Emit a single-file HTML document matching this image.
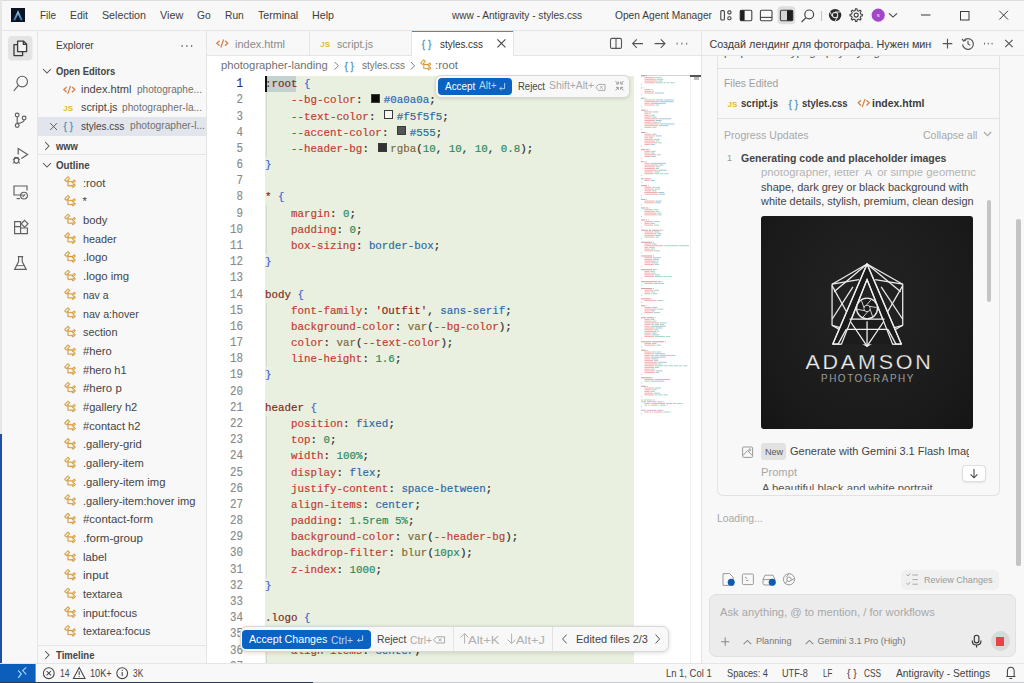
<!DOCTYPE html>
<html><head><meta charset="utf-8"><title>Antigravity - styles.css</title>
<style>
html,body{margin:0;padding:0;}
body{width:1024px;height:683px;overflow:hidden;position:relative;background:#f8f8f8;font-family:'Liberation Sans', sans-serif;}
.t{position:absolute;white-space:pre;line-height:1;}
svg{overflow:visible;}
</style></head><body>
<div style="position:absolute;left:0px;top:0px;width:1024px;height:30px;background:#f8f8f8;"></div><div style="position:absolute;left:0px;top:0px;width:1024px;height:1px;background:#dcdcdc;"></div><div style="position:absolute;left:0px;top:30px;width:1024px;height:1px;background:#e5e5e5;"></div><div style="position:absolute;left:0px;top:0px;width:2px;height:683px;background:#e6e6e6;"></div><div style="position:absolute;left:37px;top:31px;width:1px;height:633px;background:#e5e5e5;"></div><div style="position:absolute;left:206px;top:31px;width:1px;height:633px;background:#e5e5e5;"></div><div style="position:absolute;left:207px;top:31px;width:494px;height:25px;background:#f8f8f8;"></div><div style="position:absolute;left:207px;top:55px;width:494px;height:1px;background:#e5e5e5;"></div><div style="position:absolute;left:207px;top:56px;width:494px;height:608px;background:#ffffff;"></div><div style="position:absolute;left:701px;top:31px;width:1px;height:633px;background:#e5e5e5;"></div><div style="position:absolute;left:702px;top:55px;width:322px;height:1px;background:#e5e5e5;"></div><div style="position:absolute;left:0px;top:663px;width:1024px;height:1px;background:#e5e5e5;"></div><div style="position:absolute;left:0px;top:664px;width:1024px;height:19px;background:#f8f8f8;"></div><div style="position:absolute;left:0px;top:682px;width:1024px;height:1px;background:#c9cdd3;"></div><div style="position:absolute;left:0px;top:682px;width:313px;height:1px;background:#2b3a55;"></div><div style="position:absolute;left:0px;top:434px;width:2px;height:249px;background:#1f4fa0;"></div><div class="t" style="left:39.80px;top:10.44px;font-size:10.7px;color:#3c3c3c;transform:scaleX(0.9288);transform-origin:0 0;">File</div><div class="t" style="left:69.70px;top:10.44px;font-size:10.7px;color:#3c3c3c;transform:scaleX(0.9698);transform-origin:0 0;">Edit</div><div class="t" style="left:101.70px;top:10.44px;font-size:10.7px;color:#3c3c3c;transform:scaleX(0.9993);transform-origin:0 0;">Selection</div><div class="t" style="left:159.60px;top:10.44px;font-size:10.7px;color:#3c3c3c;transform:scaleX(1.0085);transform-origin:0 0;">View</div><div class="t" style="left:196.70px;top:10.44px;font-size:10.7px;color:#3c3c3c;transform:scaleX(0.9591);transform-origin:0 0;">Go</div><div class="t" style="left:224.50px;top:10.44px;font-size:10.7px;color:#3c3c3c;transform:scaleX(0.9575);transform-origin:0 0;">Run</div><div class="t" style="left:257.50px;top:10.44px;font-size:10.7px;color:#3c3c3c;transform:scaleX(0.9964);transform-origin:0 0;">Terminal</div><div class="t" style="left:312.00px;top:10.44px;font-size:10.7px;color:#3c3c3c;transform:scaleX(1.0005);transform-origin:0 0;">Help</div><div class="t" style="left:452.25px;top:10.44px;font-size:10.7px;color:#3c3c3c;transform:scaleX(0.9444);transform-origin:0 0;">www - Antigravity - styles.css</div><div class="t" style="left:615.20px;top:10.44px;font-size:10.7px;color:#3c3c3c;transform:scaleX(0.9547);transform-origin:0 0;">Open Agent Manager</div><div class="t" style="left:55.80px;top:41.33px;font-size:10px;color:#3b3b3b;transform:scaleX(1.0121);transform-origin:0 0;">Explorer</div><div class="t" style="left:55.80px;top:66.60px;font-size:10.4px;color:#454545;font-weight:700;transform:scaleX(0.9064);transform-origin:0 0;">Open Editors</div><div class="t" style="left:81.00px;top:83.99px;font-size:11px;color:#444;transform:scaleX(1.0068);transform-origin:0 0;">index.html</div><div class="t" style="left:137.00px;top:84.58px;font-size:10.3px;color:#717171;transform:scaleX(0.9784);transform-origin:0 0;">photographe...</div><div class="t" style="left:81.00px;top:102.39px;font-size:11px;color:#444;transform:scaleX(0.9788);transform-origin:0 0;">script.js</div><div class="t" style="left:122.30px;top:102.98px;font-size:10.3px;color:#717171;transform:scaleX(0.9838);transform-origin:0 0;">photographer-la...</div><div style="position:absolute;left:38px;top:117px;width:168px;height:18.5px;background:#e3e5ed;"></div><div class="t" style="left:81.00px;top:120.89px;font-size:11px;color:#444;transform:scaleX(0.9080);transform-origin:0 0;">styles.css</div><div class="t" style="left:130.00px;top:121.48px;font-size:10.3px;color:#717171;transform:scaleX(0.9920);transform-origin:0 0;">photographer-l...</div><div style="position:absolute;left:38px;top:154px;width:168px;height:1px;background:#e5e5e5;"></div><div class="t" style="left:56.05px;top:141.70px;font-size:10.4px;color:#454545;font-weight:700;transform:scaleX(0.9040);transform-origin:0 0;">www</div><div class="t" style="left:55.80px;top:160.70px;font-size:10.4px;color:#454545;font-weight:700;transform:scaleX(0.9378);transform-origin:0 0;">Outline</div><div class="t" style="left:82.50px;top:177.62px;font-size:11.2px;color:#444;transform:scaleX(1.0045);transform-origin:0 0;">:root</div><div class="t" style="left:82.50px;top:196.32px;font-size:11.2px;color:#444;">*</div><div class="t" style="left:82.50px;top:215.02px;font-size:11.2px;color:#444;transform:scaleX(1.0081);transform-origin:0 0;">body</div><div class="t" style="left:82.50px;top:233.72px;font-size:11.2px;color:#444;transform:scaleX(0.9674);transform-origin:0 0;">header</div><div class="t" style="left:82.50px;top:252.42px;font-size:11.2px;color:#444;transform:scaleX(1.0081);transform-origin:0 0;">.logo</div><div class="t" style="left:82.50px;top:271.12px;font-size:11.2px;color:#444;transform:scaleX(1.0171);transform-origin:0 0;">.logo img</div><div class="t" style="left:82.50px;top:289.82px;font-size:11.2px;color:#444;transform:scaleX(0.9293);transform-origin:0 0;">nav a</div><div class="t" style="left:82.50px;top:308.52px;font-size:11.2px;color:#444;transform:scaleX(0.9527);transform-origin:0 0;">nav a:hover</div><div class="t" style="left:82.50px;top:327.22px;font-size:11.2px;color:#444;transform:scaleX(0.9717);transform-origin:0 0;">section</div><div class="t" style="left:82.50px;top:345.92px;font-size:11.2px;color:#444;transform:scaleX(1.0027);transform-origin:0 0;">#hero</div><div class="t" style="left:82.50px;top:364.62px;font-size:11.2px;color:#444;transform:scaleX(0.9889);transform-origin:0 0;">#hero h1</div><div class="t" style="left:82.50px;top:383.32px;font-size:11.2px;color:#444;transform:scaleX(1.0206);transform-origin:0 0;">#hero p</div><div class="t" style="left:82.50px;top:402.02px;font-size:11.2px;color:#444;transform:scaleX(0.9905);transform-origin:0 0;">#gallery h2</div><div class="t" style="left:82.50px;top:420.72px;font-size:11.2px;color:#444;transform:scaleX(0.9930);transform-origin:0 0;">#contact h2</div><div class="t" style="left:82.50px;top:439.42px;font-size:11.2px;color:#444;transform:scaleX(1.0039);transform-origin:0 0;">.gallery-grid</div><div class="t" style="left:82.50px;top:458.12px;font-size:11.2px;color:#444;transform:scaleX(0.9962);transform-origin:0 0;">.gallery-item</div><div class="t" style="left:82.50px;top:476.82px;font-size:11.2px;color:#444;transform:scaleX(1.0042);transform-origin:0 0;">.gallery-item img</div><div class="t" style="left:82.50px;top:495.52px;font-size:11.2px;color:#444;transform:scaleX(0.9930);transform-origin:0 0;">.gallery-item:hover img</div><div class="t" style="left:82.50px;top:514.22px;font-size:11.2px;color:#444;transform:scaleX(1.0221);transform-origin:0 0;">#contact-form</div><div class="t" style="left:82.50px;top:532.92px;font-size:11.2px;color:#444;transform:scaleX(1.0362);transform-origin:0 0;">.form-group</div><div class="t" style="left:82.50px;top:551.62px;font-size:11.2px;color:#444;transform:scaleX(1.0026);transform-origin:0 0;">label</div><div class="t" style="left:82.50px;top:570.32px;font-size:11.2px;color:#444;transform:scaleX(1.0492);transform-origin:0 0;">input</div><div class="t" style="left:82.50px;top:589.02px;font-size:11.2px;color:#444;transform:scaleX(0.9694);transform-origin:0 0;">textarea</div><div class="t" style="left:82.50px;top:607.72px;font-size:11.2px;color:#444;transform:scaleX(1.0018);transform-origin:0 0;">input:focus</div><div class="t" style="left:82.50px;top:626.42px;font-size:11.2px;color:#444;transform:scaleX(0.9597);transform-origin:0 0;">textarea:focus</div><div style="position:absolute;left:38px;top:645px;width:168px;height:1px;background:#e5e5e5;"></div><div class="t" style="left:56.00px;top:651.00px;font-size:10.4px;color:#454545;font-weight:700;transform:scaleX(0.9163);transform-origin:0 0;">Timeline</div><div style="position:absolute;left:309px;top:31px;width:1px;height:24px;background:#e5e5e5;"></div><div style="position:absolute;left:411px;top:31px;width:1px;height:24px;background:#e5e5e5;"></div><div style="position:absolute;left:412px;top:31px;width:101px;height:25px;background:#ffffff;"></div><div style="position:absolute;left:412px;top:31px;width:101px;height:1px;background:#3c8ed0;"></div><div style="position:absolute;left:513px;top:31px;width:1px;height:24px;background:#e5e5e5;"></div><div class="t" style="left:234.50px;top:38.59px;font-size:11px;color:#8a8a8a;transform:scaleX(0.9968);transform-origin:0 0;">index.html</div><div class="t" style="left:337.00px;top:38.59px;font-size:11px;color:#8a8a8a;transform:scaleX(0.9654);transform-origin:0 0;">script.js</div><div class="t" style="left:439.60px;top:38.59px;font-size:11px;color:#333333;transform:scaleX(0.9018);transform-origin:0 0;">styles.css</div><div class="t" style="left:221.00px;top:59.92px;font-size:11.2px;color:#717171;transform:scaleX(1.0046);transform-origin:0 0;">photographer-landing</div><div class="t" style="left:362.00px;top:60.09px;font-size:11px;color:#717171;transform:scaleX(0.9018);transform-origin:0 0;">styles.css</div><div class="t" style="left:435.00px;top:60.09px;font-size:11px;color:#717171;transform:scaleX(1.0455);transform-origin:0 0;">:root</div><div style="position:absolute;left:716.5px;top:40px;width:283.5px;height:455.5px;border:1px solid #e2e2e2;border-top:none;border-radius:0 0 6px 6px;box-sizing:border-box;background:#f8f8f8;"></div><div style="position:absolute;left:717px;top:68px;width:282px;height:1px;background:#e2e2e2;"></div><div style="position:absolute;left:717px;top:118px;width:282px;height:1px;background:#e2e2e2;"></div><div style="position:absolute;left:760.7px;top:216px;width:212.7px;height:212.7px;background:radial-gradient(ellipse at 50% 40%, #232323 0%, #1c1c1c 60%, #151515 100%);border-radius:3px;"></div><div style="position:absolute;left:986.7px;top:199.5px;width:4.6px;height:102px;background:#c4c4c4;border-radius:2px;"></div><div style="position:absolute;left:1016.2px;top:219px;width:4.4px;height:347px;background:#c4c4c4;border-radius:2px;"></div><div style="position:absolute;left:761px;top:443px;width:25px;height:17.3px;background:#e2e2e2;border-radius:3px;"></div><div style="position:absolute;left:962px;top:465.4px;width:24px;height:16.4px;background:#ffffff;border:1px solid #dedede;border-radius:4px;box-sizing:border-box;box-shadow:0 1px 2px rgba(0,0,0,0.08);"></div><div style="position:absolute;left:900.8px;top:570.4px;width:98.5px;height:19.2px;background:#f0f0f0;border-radius:5px;"></div><div style="position:absolute;left:709.4px;top:593.6px;width:306.4px;height:63px;background:#ececec;border:1px solid #e0e0e0;border-radius:7px;box-sizing:border-box;"></div><div style="position:absolute;left:990.5px;top:631.3px;width:19.2px;height:20px;background:#d9d9d9;border-radius:50%;"></div><div style="position:absolute;left:702px;top:31px;width:322px;height:24px;background:#f8f8f8;"></div><div style="position:absolute;left:702px;top:55px;width:322px;height:1px;background:#e5e5e5;"></div><div style="position:absolute;left:996px;top:637px;width:8.4px;height:8.6px;background:#e0474c;"></div><div class="t" style="left:709.40px;top:38.86px;font-size:10.8px;color:#3b3b3b;width:223.00px;overflow:hidden;">Создай лендинг для фотографа. Нужен мині</div><div class="t" style="left:723.75px;top:79.00px;font-size:10.4px;color:#a0a0a0;transform:scaleX(0.9993);transform-origin:0 0;">Files Edited</div><div class="t" style="left:741.00px;top:97.69px;font-size:11px;color:#3b3b3b;font-weight:700;transform:scaleX(0.8771);transform-origin:0 0;">script.js</div><div class="t" style="left:802.00px;top:97.69px;font-size:11px;color:#3b3b3b;font-weight:700;transform:scaleX(0.8672);transform-origin:0 0;">styles.css</div><div class="t" style="left:872.00px;top:97.69px;font-size:11px;color:#3b3b3b;font-weight:700;transform:scaleX(0.9527);transform-origin:0 0;">index.html</div><div class="t" style="left:724.00px;top:129.63px;font-size:10.6px;color:#a8a8a8;transform:scaleX(0.9982);transform-origin:0 0;">Progress Updates</div><div class="t" style="left:922.80px;top:129.71px;font-size:10.5px;color:#a8a8a8;transform:scaleX(1.0021);transform-origin:0 0;">Collapse all</div><div class="t" style="left:727.00px;top:154.08px;font-size:9px;color:#9a9a9a;">1</div><div class="t" style="left:740.60px;top:153.39px;font-size:11px;color:#444;font-weight:700;transform:scaleX(0.9546);transform-origin:0 0;">Generating code and placeholder images</div><div style="position:absolute;left:740px;top:169.6px;width:250px;height:11px;overflow:hidden;"><div class="t" style="left:21.25px;top:-2.91px;font-size:11px;color:#b4b4b4;transform:scaleX(1.0284);transform-origin:0 0;">photographer, letter &#x27;A&#x27; or simple geometric</div></div><div style="position:absolute;left:740px;top:480px;width:250px;height:9.7px;overflow:hidden;"><div class="t" style="left:22.40px;top:2.69px;font-size:11px;color:#555;transform:scaleX(1.0183);transform-origin:0 0;">A beautiful black and white portrait</div></div><div style="position:absolute;left:705px;top:56px;width:290px;height:4px;overflow:hidden;"><div class="t" style="left:19.00px;top:-8.71px;font-size:11px;color:#555;transform:scaleX(1.0412);transform-origin:0 0;">proportional typography styling</div></div><div class="t" style="left:761.00px;top:182.09px;font-size:11px;color:#444;transform:scaleX(1.0030);transform-origin:0 0;">shape, dark grey or black background with</div><div class="t" style="left:761.05px;top:196.39px;font-size:11px;color:#444;transform:scaleX(0.9936);transform-origin:0 0;">white details, stylish, premium, clean design</div><div class="t" style="left:790.00px;top:446.29px;font-size:11px;color:#444;width:179.00px;overflow:hidden;">Generate with Gemini 3.1 Flash Image</div><div class="t" style="left:764.50px;top:446.87px;font-size:9.6px;color:#555;transform:scaleX(0.9456);transform-origin:0 0;">New</div><div class="t" style="left:761.00px;top:466.61px;font-size:10.5px;color:#a8a8a8;transform:scaleX(1.0631);transform-origin:0 0;">Prompt</div><div class="t" style="left:716.50px;top:514.20px;font-size:10.4px;color:#a8a8a8;transform:scaleX(1.0020);transform-origin:0 0;">Loading...</div><div class="t" style="left:924.00px;top:576.30px;font-size:9.1px;color:#9a9a9a;transform:scaleX(0.9972);transform-origin:0 0;">Review Changes</div><div class="t" style="left:720.30px;top:607.12px;font-size:11.2px;color:#a8a8a8;transform:scaleX(1.0003);transform-origin:0 0;">Ask anything, @ to mention, / for workflows</div><div class="t" style="left:755.80px;top:637.10px;font-size:9.1px;color:#777;transform:scaleX(1.0029);transform-origin:0 0;">Planning</div><div class="t" style="left:817.50px;top:637.10px;font-size:9.1px;color:#777;transform:scaleX(1.0000);transform-origin:0 0;">Gemini 3.1 Pro (High)</div><div style="position:absolute;left:264.5px;top:76px;width:369.5px;height:588px;background:#eaf0df;"></div><div style="position:absolute;left:264.9px;top:76px;width:31.5px;height:16px;background:#c3d2cf;"></div><div class="t" style="left:236.50px;top:79.23px;font-size:10.83px;color:#1b2f7a;font-family:'Liberation Mono', monospace;transform:scaleY(1.1);transform-origin:0 9.17px;-webkit-text-stroke:0.15px currentColor;">1</div><div class="t" style="left:236.50px;top:95.41px;font-size:10.83px;color:#8a8a8a;font-family:'Liberation Mono', monospace;transform:scaleY(1.1);transform-origin:0 9.17px;-webkit-text-stroke:0.15px currentColor;">2</div><div class="t" style="left:236.50px;top:111.59px;font-size:10.83px;color:#8a8a8a;font-family:'Liberation Mono', monospace;transform:scaleY(1.1);transform-origin:0 9.17px;-webkit-text-stroke:0.15px currentColor;">3</div><div class="t" style="left:236.50px;top:127.77px;font-size:10.83px;color:#8a8a8a;font-family:'Liberation Mono', monospace;transform:scaleY(1.1);transform-origin:0 9.17px;-webkit-text-stroke:0.15px currentColor;">4</div><div class="t" style="left:236.50px;top:143.95px;font-size:10.83px;color:#8a8a8a;font-family:'Liberation Mono', monospace;transform:scaleY(1.1);transform-origin:0 9.17px;-webkit-text-stroke:0.15px currentColor;">5</div><div class="t" style="left:236.50px;top:160.13px;font-size:10.83px;color:#8a8a8a;font-family:'Liberation Mono', monospace;transform:scaleY(1.1);transform-origin:0 9.17px;-webkit-text-stroke:0.15px currentColor;">6</div><div class="t" style="left:236.50px;top:176.31px;font-size:10.83px;color:#8a8a8a;font-family:'Liberation Mono', monospace;transform:scaleY(1.1);transform-origin:0 9.17px;-webkit-text-stroke:0.15px currentColor;">7</div><div class="t" style="left:236.50px;top:192.49px;font-size:10.83px;color:#8a8a8a;font-family:'Liberation Mono', monospace;transform:scaleY(1.1);transform-origin:0 9.17px;-webkit-text-stroke:0.15px currentColor;">8</div><div class="t" style="left:236.50px;top:208.67px;font-size:10.83px;color:#8a8a8a;font-family:'Liberation Mono', monospace;transform:scaleY(1.1);transform-origin:0 9.17px;-webkit-text-stroke:0.15px currentColor;">9</div><div class="t" style="left:230.00px;top:224.85px;font-size:10.83px;color:#8a8a8a;font-family:'Liberation Mono', monospace;transform:scaleY(1.1);transform-origin:0 9.17px;-webkit-text-stroke:0.15px currentColor;">10</div><div class="t" style="left:230.00px;top:241.03px;font-size:10.83px;color:#8a8a8a;font-family:'Liberation Mono', monospace;transform:scaleY(1.1);transform-origin:0 9.17px;-webkit-text-stroke:0.15px currentColor;">11</div><div class="t" style="left:230.00px;top:257.21px;font-size:10.83px;color:#8a8a8a;font-family:'Liberation Mono', monospace;transform:scaleY(1.1);transform-origin:0 9.17px;-webkit-text-stroke:0.15px currentColor;">12</div><div class="t" style="left:230.00px;top:273.39px;font-size:10.83px;color:#8a8a8a;font-family:'Liberation Mono', monospace;transform:scaleY(1.1);transform-origin:0 9.17px;-webkit-text-stroke:0.15px currentColor;">13</div><div class="t" style="left:230.00px;top:289.57px;font-size:10.83px;color:#8a8a8a;font-family:'Liberation Mono', monospace;transform:scaleY(1.1);transform-origin:0 9.17px;-webkit-text-stroke:0.15px currentColor;">14</div><div class="t" style="left:230.00px;top:305.75px;font-size:10.83px;color:#8a8a8a;font-family:'Liberation Mono', monospace;transform:scaleY(1.1);transform-origin:0 9.17px;-webkit-text-stroke:0.15px currentColor;">15</div><div class="t" style="left:230.00px;top:321.93px;font-size:10.83px;color:#8a8a8a;font-family:'Liberation Mono', monospace;transform:scaleY(1.1);transform-origin:0 9.17px;-webkit-text-stroke:0.15px currentColor;">16</div><div class="t" style="left:230.00px;top:338.11px;font-size:10.83px;color:#8a8a8a;font-family:'Liberation Mono', monospace;transform:scaleY(1.1);transform-origin:0 9.17px;-webkit-text-stroke:0.15px currentColor;">17</div><div class="t" style="left:230.00px;top:354.29px;font-size:10.83px;color:#8a8a8a;font-family:'Liberation Mono', monospace;transform:scaleY(1.1);transform-origin:0 9.17px;-webkit-text-stroke:0.15px currentColor;">18</div><div class="t" style="left:230.00px;top:370.47px;font-size:10.83px;color:#8a8a8a;font-family:'Liberation Mono', monospace;transform:scaleY(1.1);transform-origin:0 9.17px;-webkit-text-stroke:0.15px currentColor;">19</div><div class="t" style="left:230.00px;top:386.65px;font-size:10.83px;color:#8a8a8a;font-family:'Liberation Mono', monospace;transform:scaleY(1.1);transform-origin:0 9.17px;-webkit-text-stroke:0.15px currentColor;">20</div><div class="t" style="left:230.00px;top:402.83px;font-size:10.83px;color:#8a8a8a;font-family:'Liberation Mono', monospace;transform:scaleY(1.1);transform-origin:0 9.17px;-webkit-text-stroke:0.15px currentColor;">21</div><div class="t" style="left:230.00px;top:419.01px;font-size:10.83px;color:#8a8a8a;font-family:'Liberation Mono', monospace;transform:scaleY(1.1);transform-origin:0 9.17px;-webkit-text-stroke:0.15px currentColor;">22</div><div class="t" style="left:230.00px;top:435.19px;font-size:10.83px;color:#8a8a8a;font-family:'Liberation Mono', monospace;transform:scaleY(1.1);transform-origin:0 9.17px;-webkit-text-stroke:0.15px currentColor;">23</div><div class="t" style="left:230.00px;top:451.37px;font-size:10.83px;color:#8a8a8a;font-family:'Liberation Mono', monospace;transform:scaleY(1.1);transform-origin:0 9.17px;-webkit-text-stroke:0.15px currentColor;">24</div><div class="t" style="left:230.00px;top:467.55px;font-size:10.83px;color:#8a8a8a;font-family:'Liberation Mono', monospace;transform:scaleY(1.1);transform-origin:0 9.17px;-webkit-text-stroke:0.15px currentColor;">25</div><div class="t" style="left:230.00px;top:483.73px;font-size:10.83px;color:#8a8a8a;font-family:'Liberation Mono', monospace;transform:scaleY(1.1);transform-origin:0 9.17px;-webkit-text-stroke:0.15px currentColor;">26</div><div class="t" style="left:230.00px;top:499.91px;font-size:10.83px;color:#8a8a8a;font-family:'Liberation Mono', monospace;transform:scaleY(1.1);transform-origin:0 9.17px;-webkit-text-stroke:0.15px currentColor;">27</div><div class="t" style="left:230.00px;top:516.09px;font-size:10.83px;color:#8a8a8a;font-family:'Liberation Mono', monospace;transform:scaleY(1.1);transform-origin:0 9.17px;-webkit-text-stroke:0.15px currentColor;">28</div><div class="t" style="left:230.00px;top:532.27px;font-size:10.83px;color:#8a8a8a;font-family:'Liberation Mono', monospace;transform:scaleY(1.1);transform-origin:0 9.17px;-webkit-text-stroke:0.15px currentColor;">29</div><div class="t" style="left:230.00px;top:548.45px;font-size:10.83px;color:#8a8a8a;font-family:'Liberation Mono', monospace;transform:scaleY(1.1);transform-origin:0 9.17px;-webkit-text-stroke:0.15px currentColor;">30</div><div class="t" style="left:230.00px;top:564.63px;font-size:10.83px;color:#8a8a8a;font-family:'Liberation Mono', monospace;transform:scaleY(1.1);transform-origin:0 9.17px;-webkit-text-stroke:0.15px currentColor;">31</div><div class="t" style="left:230.00px;top:580.81px;font-size:10.83px;color:#8a8a8a;font-family:'Liberation Mono', monospace;transform:scaleY(1.1);transform-origin:0 9.17px;-webkit-text-stroke:0.15px currentColor;">32</div><div class="t" style="left:230.00px;top:596.99px;font-size:10.83px;color:#8a8a8a;font-family:'Liberation Mono', monospace;transform:scaleY(1.1);transform-origin:0 9.17px;-webkit-text-stroke:0.15px currentColor;">33</div><div class="t" style="left:230.00px;top:613.17px;font-size:10.83px;color:#8a8a8a;font-family:'Liberation Mono', monospace;transform:scaleY(1.1);transform-origin:0 9.17px;-webkit-text-stroke:0.15px currentColor;">34</div><div class="t" style="left:230.00px;top:629.35px;font-size:10.83px;color:#8a8a8a;font-family:'Liberation Mono', monospace;transform:scaleY(1.1);transform-origin:0 9.17px;-webkit-text-stroke:0.15px currentColor;">35</div><div class="t" style="left:230.00px;top:645.53px;font-size:10.83px;color:#8a8a8a;font-family:'Liberation Mono', monospace;transform:scaleY(1.1);transform-origin:0 9.17px;-webkit-text-stroke:0.15px currentColor;">36</div><div class="t" style="left:230.00px;top:661.71px;font-size:10.83px;color:#8a8a8a;font-family:'Liberation Mono', monospace;transform:scaleY(1.1);transform-origin:0 9.17px;-webkit-text-stroke:0.15px currentColor;">37</div><div class="t" style="left:264.90px;top:79.23px;font-size:10.83px;color:#2a2a2a;font-family:'Liberation Mono', monospace;-webkit-text-stroke:0.18px currentColor;"><span style="color:#7d2a1c">:root</span><span style="color:#2a2a2a"> </span><span style="color:#3a62d8">{</span></div><div class="t" style="left:264.90px;top:95.41px;font-size:10.83px;color:#2a2a2a;font-family:'Liberation Mono', monospace;-webkit-text-stroke:0.18px currentColor;"><span style="color:#2a2a2a">    </span><span style="color:#c43b30">--bg-color</span><span style="color:#2a2a2a">: </span><span style="display:inline-block;width:14.8px;height:1px;position:relative;"><i style="position:absolute;left:2.6px;top:-8.4px;width:7px;height:7px;background:#0a0a0a;border:1px solid #3a3a3a;"></i></span><span style="color:#2a6aab">#0a0a0a</span><span style="color:#2a2a2a">;</span></div><div class="t" style="left:264.90px;top:111.59px;font-size:10.83px;color:#2a2a2a;font-family:'Liberation Mono', monospace;-webkit-text-stroke:0.18px currentColor;"><span style="color:#2a2a2a">    </span><span style="color:#c43b30">--text-color</span><span style="color:#2a2a2a">: </span><span style="display:inline-block;width:14.8px;height:1px;position:relative;"><i style="position:absolute;left:2.6px;top:-8.4px;width:7px;height:7px;background:#f5f5f5;border:1px solid #3a3a3a;"></i></span><span style="color:#2a6aab">#f5f5f5</span><span style="color:#2a2a2a">;</span></div><div class="t" style="left:264.90px;top:127.77px;font-size:10.83px;color:#2a2a2a;font-family:'Liberation Mono', monospace;-webkit-text-stroke:0.18px currentColor;"><span style="color:#2a2a2a">    </span><span style="color:#c43b30">--accent-color</span><span style="color:#2a2a2a">: </span><span style="display:inline-block;width:14.8px;height:1px;position:relative;"><i style="position:absolute;left:2.6px;top:-8.4px;width:7px;height:7px;background:#555555;border:1px solid #3a3a3a;"></i></span><span style="color:#2a6aab">#555</span><span style="color:#2a2a2a">;</span></div><div class="t" style="left:264.90px;top:143.95px;font-size:10.83px;color:#2a2a2a;font-family:'Liberation Mono', monospace;-webkit-text-stroke:0.18px currentColor;"><span style="color:#2a2a2a">    </span><span style="color:#c43b30">--header-bg</span><span style="color:#2a2a2a">: </span><span style="display:inline-block;width:14.8px;height:1px;position:relative;"><i style="position:absolute;left:2.6px;top:-8.4px;width:7px;height:7px;background:#333333;border:1px solid #3a3a3a;"></i></span><span style="color:#80683a">rgba</span><span style="color:#2a2a2a">(</span><span style="color:#2a8a5e">10</span><span style="color:#2a2a2a">, </span><span style="color:#2a8a5e">10</span><span style="color:#2a2a2a">, </span><span style="color:#2a8a5e">10</span><span style="color:#2a2a2a">, </span><span style="color:#2a8a5e">0.8</span><span style="color:#2a2a2a">);</span></div><div class="t" style="left:264.90px;top:160.13px;font-size:10.83px;color:#2a2a2a;font-family:'Liberation Mono', monospace;-webkit-text-stroke:0.18px currentColor;"><span style="color:#3a62d8">}</span></div><div class="t" style="left:264.90px;top:192.49px;font-size:10.83px;color:#2a2a2a;font-family:'Liberation Mono', monospace;-webkit-text-stroke:0.18px currentColor;"><span style="color:#7d2a1c">*</span><span style="color:#2a2a2a"> </span><span style="color:#3a62d8">{</span></div><div class="t" style="left:264.90px;top:208.67px;font-size:10.83px;color:#2a2a2a;font-family:'Liberation Mono', monospace;-webkit-text-stroke:0.18px currentColor;"><span style="color:#2a2a2a">    </span><span style="color:#c43b30">margin</span><span style="color:#2a2a2a">: </span><span style="color:#2a8a5e">0</span><span style="color:#2a2a2a">;</span></div><div class="t" style="left:264.90px;top:224.85px;font-size:10.83px;color:#2a2a2a;font-family:'Liberation Mono', monospace;-webkit-text-stroke:0.18px currentColor;"><span style="color:#2a2a2a">    </span><span style="color:#c43b30">padding</span><span style="color:#2a2a2a">: </span><span style="color:#2a8a5e">0</span><span style="color:#2a2a2a">;</span></div><div class="t" style="left:264.90px;top:241.03px;font-size:10.83px;color:#2a2a2a;font-family:'Liberation Mono', monospace;-webkit-text-stroke:0.18px currentColor;"><span style="color:#2a2a2a">    </span><span style="color:#c43b30">box-sizing</span><span style="color:#2a2a2a">: </span><span style="color:#2a6aab">border-box</span><span style="color:#2a2a2a">;</span></div><div class="t" style="left:264.90px;top:257.21px;font-size:10.83px;color:#2a2a2a;font-family:'Liberation Mono', monospace;-webkit-text-stroke:0.18px currentColor;"><span style="color:#3a62d8">}</span></div><div class="t" style="left:264.90px;top:289.57px;font-size:10.83px;color:#2a2a2a;font-family:'Liberation Mono', monospace;-webkit-text-stroke:0.18px currentColor;"><span style="color:#7d2a1c">body</span><span style="color:#2a2a2a"> </span><span style="color:#3a62d8">{</span></div><div class="t" style="left:264.90px;top:305.75px;font-size:10.83px;color:#2a2a2a;font-family:'Liberation Mono', monospace;-webkit-text-stroke:0.18px currentColor;"><span style="color:#2a2a2a">    </span><span style="color:#c43b30">font-family</span><span style="color:#2a2a2a">: </span><span style="color:#a31515">&#x27;Outfit&#x27;</span><span style="color:#2a2a2a">, </span><span style="color:#2a6aab">sans-serif</span><span style="color:#2a2a2a">;</span></div><div class="t" style="left:264.90px;top:321.93px;font-size:10.83px;color:#2a2a2a;font-family:'Liberation Mono', monospace;-webkit-text-stroke:0.18px currentColor;"><span style="color:#2a2a2a">    </span><span style="color:#c43b30">background-color</span><span style="color:#2a2a2a">: </span><span style="color:#80683a">var</span><span style="color:#2a2a2a">(</span><span style="color:#c43b30">--bg-color</span><span style="color:#2a2a2a">);</span></div><div class="t" style="left:264.90px;top:338.11px;font-size:10.83px;color:#2a2a2a;font-family:'Liberation Mono', monospace;-webkit-text-stroke:0.18px currentColor;"><span style="color:#2a2a2a">    </span><span style="color:#c43b30">color</span><span style="color:#2a2a2a">: </span><span style="color:#80683a">var</span><span style="color:#2a2a2a">(</span><span style="color:#c43b30">--text-color</span><span style="color:#2a2a2a">);</span></div><div class="t" style="left:264.90px;top:354.29px;font-size:10.83px;color:#2a2a2a;font-family:'Liberation Mono', monospace;-webkit-text-stroke:0.18px currentColor;"><span style="color:#2a2a2a">    </span><span style="color:#c43b30">line-height</span><span style="color:#2a2a2a">: </span><span style="color:#2a8a5e">1.6</span><span style="color:#2a2a2a">;</span></div><div class="t" style="left:264.90px;top:370.47px;font-size:10.83px;color:#2a2a2a;font-family:'Liberation Mono', monospace;-webkit-text-stroke:0.18px currentColor;"><span style="color:#3a62d8">}</span></div><div class="t" style="left:264.90px;top:402.83px;font-size:10.83px;color:#2a2a2a;font-family:'Liberation Mono', monospace;-webkit-text-stroke:0.18px currentColor;"><span style="color:#7d2a1c">header</span><span style="color:#2a2a2a"> </span><span style="color:#3a62d8">{</span></div><div class="t" style="left:264.90px;top:419.01px;font-size:10.83px;color:#2a2a2a;font-family:'Liberation Mono', monospace;-webkit-text-stroke:0.18px currentColor;"><span style="color:#2a2a2a">    </span><span style="color:#c43b30">position</span><span style="color:#2a2a2a">: </span><span style="color:#2a6aab">fixed</span><span style="color:#2a2a2a">;</span></div><div class="t" style="left:264.90px;top:435.19px;font-size:10.83px;color:#2a2a2a;font-family:'Liberation Mono', monospace;-webkit-text-stroke:0.18px currentColor;"><span style="color:#2a2a2a">    </span><span style="color:#c43b30">top</span><span style="color:#2a2a2a">: </span><span style="color:#2a8a5e">0</span><span style="color:#2a2a2a">;</span></div><div class="t" style="left:264.90px;top:451.37px;font-size:10.83px;color:#2a2a2a;font-family:'Liberation Mono', monospace;-webkit-text-stroke:0.18px currentColor;"><span style="color:#2a2a2a">    </span><span style="color:#c43b30">width</span><span style="color:#2a2a2a">: </span><span style="color:#2a8a5e">100%</span><span style="color:#2a2a2a">;</span></div><div class="t" style="left:264.90px;top:467.55px;font-size:10.83px;color:#2a2a2a;font-family:'Liberation Mono', monospace;-webkit-text-stroke:0.18px currentColor;"><span style="color:#2a2a2a">    </span><span style="color:#c43b30">display</span><span style="color:#2a2a2a">: </span><span style="color:#2a6aab">flex</span><span style="color:#2a2a2a">;</span></div><div class="t" style="left:264.90px;top:483.73px;font-size:10.83px;color:#2a2a2a;font-family:'Liberation Mono', monospace;-webkit-text-stroke:0.18px currentColor;"><span style="color:#2a2a2a">    </span><span style="color:#c43b30">justify-content</span><span style="color:#2a2a2a">: </span><span style="color:#2a6aab">space-between</span><span style="color:#2a2a2a">;</span></div><div class="t" style="left:264.90px;top:499.91px;font-size:10.83px;color:#2a2a2a;font-family:'Liberation Mono', monospace;-webkit-text-stroke:0.18px currentColor;"><span style="color:#2a2a2a">    </span><span style="color:#c43b30">align-items</span><span style="color:#2a2a2a">: </span><span style="color:#2a6aab">center</span><span style="color:#2a2a2a">;</span></div><div class="t" style="left:264.90px;top:516.09px;font-size:10.83px;color:#2a2a2a;font-family:'Liberation Mono', monospace;-webkit-text-stroke:0.18px currentColor;"><span style="color:#2a2a2a">    </span><span style="color:#c43b30">padding</span><span style="color:#2a2a2a">: </span><span style="color:#2a8a5e">1.5rem 5%</span><span style="color:#2a2a2a">;</span></div><div class="t" style="left:264.90px;top:532.27px;font-size:10.83px;color:#2a2a2a;font-family:'Liberation Mono', monospace;-webkit-text-stroke:0.18px currentColor;"><span style="color:#2a2a2a">    </span><span style="color:#c43b30">background-color</span><span style="color:#2a2a2a">: </span><span style="color:#80683a">var</span><span style="color:#2a2a2a">(</span><span style="color:#c43b30">--header-bg</span><span style="color:#2a2a2a">);</span></div><div class="t" style="left:264.90px;top:548.45px;font-size:10.83px;color:#2a2a2a;font-family:'Liberation Mono', monospace;-webkit-text-stroke:0.18px currentColor;"><span style="color:#2a2a2a">    </span><span style="color:#c43b30">backdrop-filter</span><span style="color:#2a2a2a">: </span><span style="color:#80683a">blur</span><span style="color:#2a2a2a">(</span><span style="color:#2a8a5e">10px</span><span style="color:#2a2a2a">);</span></div><div class="t" style="left:264.90px;top:564.63px;font-size:10.83px;color:#2a2a2a;font-family:'Liberation Mono', monospace;-webkit-text-stroke:0.18px currentColor;"><span style="color:#2a2a2a">    </span><span style="color:#c43b30">z-index</span><span style="color:#2a2a2a">: </span><span style="color:#2a8a5e">1000</span><span style="color:#2a2a2a">;</span></div><div class="t" style="left:264.90px;top:580.81px;font-size:10.83px;color:#2a2a2a;font-family:'Liberation Mono', monospace;-webkit-text-stroke:0.18px currentColor;"><span style="color:#3a62d8">}</span></div><div class="t" style="left:264.90px;top:613.17px;font-size:10.83px;color:#2a2a2a;font-family:'Liberation Mono', monospace;-webkit-text-stroke:0.18px currentColor;"><span style="color:#7d2a1c">.logo</span><span style="color:#2a2a2a"> </span><span style="color:#3a62d8">{</span></div><div class="t" style="left:264.90px;top:629.35px;font-size:10.83px;color:#2a2a2a;font-family:'Liberation Mono', monospace;-webkit-text-stroke:0.18px currentColor;"><span style="color:#2a2a2a">    </span><span style="color:#c43b30">display</span><span style="color:#2a2a2a">: </span><span style="color:#2a6aab">flex</span><span style="color:#2a2a2a">;</span></div><div class="t" style="left:264.90px;top:645.53px;font-size:10.83px;color:#2a2a2a;font-family:'Liberation Mono', monospace;-webkit-text-stroke:0.18px currentColor;"><span style="color:#2a2a2a">    </span><span style="color:#c43b30">align-items</span><span style="color:#2a2a2a">: </span><span style="color:#2a6aab">center</span><span style="color:#2a2a2a">;</span></div><div class="t" style="left:264.90px;top:661.71px;font-size:10.83px;color:#2a2a2a;font-family:'Liberation Mono', monospace;-webkit-text-stroke:0.18px currentColor;"><span style="color:#2a2a2a">    </span><span style="color:#c43b30">gap</span><span style="color:#2a2a2a">: </span><span style="color:#2a8a5e">1rem</span><span style="color:#2a2a2a">;</span></div><div style="position:absolute;left:265.5px;top:92.18px;width:1px;height:64.72px;background:#d6dccb;"></div><div style="position:absolute;left:265.5px;top:205.44px;width:1px;height:48.54px;background:#d6dccb;"></div><div style="position:absolute;left:265.5px;top:302.52px;width:1px;height:64.72px;background:#d6dccb;"></div><div style="position:absolute;left:265.5px;top:415.78px;width:1px;height:161.8px;background:#d6dccb;"></div><div style="position:absolute;left:265.5px;top:626.12px;width:1px;height:48.54px;background:#d6dccb;"></div><div style="position:absolute;left:265px;top:76px;width:1.6px;height:16px;background:#111;"></div><div style="position:absolute;left:435.2px;top:75.2px;width:195.3px;height:22.5px;background:#f8f8f8;border:1px solid #d8d8d8;border-radius:6px;box-sizing:border-box;box-shadow:0 1px 3px rgba(0,0,0,0.12);"></div><div style="position:absolute;left:437.6px;top:77.5px;width:74.4px;height:17.1px;background:#0a63c2;border-radius:4px;"></div><div class="t" style="left:444.60px;top:80.54px;font-size:10.7px;color:#ffffff;transform:scaleX(0.9300);transform-origin:0 0;">Accept</div><div class="t" style="left:478.60px;top:81.13px;font-size:10px;color:#b8d4f2;transform:scaleX(1.0057);transform-origin:0 0;">Alt+</div><div class="t" style="left:518.40px;top:80.54px;font-size:10.7px;color:#444;transform:scaleX(0.8901);transform-origin:0 0;">Reject</div><div class="t" style="left:549.40px;top:81.13px;font-size:10px;color:#a8a8a8;transform:scaleX(1.0381);transform-origin:0 0;">Shift+Alt+</div><div style="position:absolute;left:239.9px;top:626.4px;width:429.6px;height:26px;background:#f8f8f8;border:1px solid #d8d8d8;border-radius:7px;box-sizing:border-box;box-shadow:0 1px 4px rgba(0,0,0,0.14);"></div><div style="position:absolute;left:242.4px;top:630.3px;width:128.6px;height:18.3px;background:#0a63c2;border-radius:4px;"></div><div class="t" style="left:249.00px;top:634.29px;font-size:11px;color:#ffffff;transform:scaleX(0.9698);transform-origin:0 0;">Accept Changes</div><div class="t" style="left:330.50px;top:634.71px;font-size:10.5px;color:#b8d4f2;transform:scaleX(0.9791);transform-origin:0 0;">Ctrl+</div><div class="t" style="left:377.40px;top:634.29px;font-size:11px;color:#444;transform:scaleX(0.9428);transform-origin:0 0;">Reject</div><div class="t" style="left:410.00px;top:634.71px;font-size:10.5px;color:#a8a8a8;transform:scaleX(0.9791);transform-origin:0 0;">Ctrl+</div><div style="position:absolute;left:453.3px;top:627.4px;width:1px;height:24px;background:#e2e2e2;"></div><div style="position:absolute;left:552.4px;top:627.4px;width:1px;height:24px;background:#e2e2e2;"></div><div class="t" style="left:468.00px;top:634.71px;font-size:10.5px;color:#b0b0b0;transform:scaleX(1.2397);transform-origin:0 0;">Alt+K</div><div class="t" style="left:516.00px;top:634.71px;font-size:10.5px;color:#b0b0b0;transform:scaleX(1.2275);transform-origin:0 0;">Alt+J</div><div class="t" style="left:575.50px;top:634.29px;font-size:11px;color:#444;transform:scaleX(0.9964);transform-origin:0 0;">Edited files 2/3</div><div style="position:absolute;left:641px;top:75px;width:49px;height:1px;background:#d4d4d4;"></div><div style="position:absolute;left:641px;top:75px;width:48px;height:589px;overflow:hidden;"><svg style="position:absolute;left:-641px;top:-75px;opacity:0.42" width="1024" height="683" viewBox="0 0 1024 683"><rect x="641.00" y="75.40" width="4.30" height="1.0" fill="#8b2020"/><rect x="646.16" y="75.40" width="0.86" height="1.0" fill="#3060e0"/><rect x="644.44" y="77.12" width="9.46" height="1.0" fill="#e04040"/><rect x="654.76" y="77.12" width="6.88" height="1.0" fill="#2a9a70"/><rect x="644.44" y="78.83" width="11.18" height="1.0" fill="#e04040"/><rect x="656.48" y="78.83" width="6.88" height="1.0" fill="#2a9a70"/><rect x="644.44" y="80.55" width="12.90" height="1.0" fill="#e04040"/><rect x="658.20" y="80.55" width="4.30" height="1.0" fill="#2a9a70"/><rect x="644.44" y="82.26" width="10.32" height="1.0" fill="#e04040"/><rect x="655.62" y="82.26" width="6.88" height="1.0" fill="#2a9a70"/><rect x="663.36" y="82.26" width="2.58" height="1.0" fill="#2a9a70"/><rect x="666.80" y="82.26" width="2.58" height="1.0" fill="#2a9a70"/><rect x="670.24" y="82.26" width="4.30" height="1.0" fill="#2a9a70"/><rect x="641.00" y="83.98" width="0.86" height="1.0" fill="#3060e0"/><rect x="641.00" y="87.41" width="0.86" height="1.0" fill="#8b2020"/><rect x="642.72" y="87.41" width="0.86" height="1.0" fill="#3060e0"/><rect x="644.44" y="89.12" width="6.02" height="1.0" fill="#e04040"/><rect x="651.32" y="89.12" width="1.72" height="1.0" fill="#2a9a70"/><rect x="644.44" y="90.84" width="6.88" height="1.0" fill="#e04040"/><rect x="652.18" y="90.84" width="1.72" height="1.0" fill="#2a9a70"/><rect x="644.44" y="92.55" width="9.46" height="1.0" fill="#e04040"/><rect x="654.76" y="92.55" width="9.46" height="1.0" fill="#2a7ab0"/><rect x="641.00" y="94.27" width="0.86" height="1.0" fill="#3060e0"/><rect x="641.00" y="97.70" width="3.44" height="1.0" fill="#8b2020"/><rect x="645.30" y="97.70" width="0.86" height="1.0" fill="#3060e0"/><rect x="644.44" y="99.41" width="10.32" height="1.0" fill="#e04040"/><rect x="655.62" y="99.41" width="7.74" height="1.0" fill="#2a7ab0"/><rect x="664.22" y="99.41" width="9.46" height="1.0" fill="#2a7ab0"/><rect x="644.44" y="101.12" width="14.62" height="1.0" fill="#e04040"/><rect x="659.92" y="101.12" width="13.76" height="1.0" fill="#2a7ab0"/><rect x="644.44" y="102.84" width="5.16" height="1.0" fill="#e04040"/><rect x="650.46" y="102.84" width="15.48" height="1.0" fill="#2a7ab0"/><rect x="644.44" y="104.56" width="10.32" height="1.0" fill="#e04040"/><rect x="655.62" y="104.56" width="3.44" height="1.0" fill="#2a9a70"/><rect x="641.00" y="106.27" width="0.86" height="1.0" fill="#3060e0"/><rect x="641.00" y="109.70" width="5.16" height="1.0" fill="#8b2020"/><rect x="647.02" y="109.70" width="0.86" height="1.0" fill="#3060e0"/><rect x="644.44" y="111.42" width="7.74" height="1.0" fill="#e04040"/><rect x="653.04" y="111.42" width="5.16" height="1.0" fill="#2a7ab0"/><rect x="644.44" y="113.13" width="3.44" height="1.0" fill="#e04040"/><rect x="648.74" y="113.13" width="1.72" height="1.0" fill="#2a9a70"/><rect x="644.44" y="114.84" width="5.16" height="1.0" fill="#e04040"/><rect x="650.46" y="114.84" width="4.30" height="1.0" fill="#2a9a70"/><rect x="644.44" y="116.56" width="6.88" height="1.0" fill="#e04040"/><rect x="652.18" y="116.56" width="4.30" height="1.0" fill="#2a7ab0"/><rect x="644.44" y="118.28" width="13.76" height="1.0" fill="#e04040"/><rect x="659.06" y="118.28" width="12.04" height="1.0" fill="#2a7ab0"/><rect x="644.44" y="119.99" width="10.32" height="1.0" fill="#e04040"/><rect x="655.62" y="119.99" width="6.02" height="1.0" fill="#2a7ab0"/><rect x="644.44" y="121.71" width="6.88" height="1.0" fill="#e04040"/><rect x="652.18" y="121.71" width="5.16" height="1.0" fill="#2a9a70"/><rect x="658.20" y="121.71" width="2.58" height="1.0" fill="#2a9a70"/><rect x="644.44" y="123.42" width="14.62" height="1.0" fill="#e04040"/><rect x="659.92" y="123.42" width="14.62" height="1.0" fill="#2a7ab0"/><rect x="644.44" y="125.14" width="13.76" height="1.0" fill="#e04040"/><rect x="659.06" y="125.14" width="9.46" height="1.0" fill="#2a9a70"/><rect x="644.44" y="126.85" width="6.88" height="1.0" fill="#e04040"/><rect x="652.18" y="126.85" width="4.30" height="1.0" fill="#2a9a70"/><rect x="641.00" y="128.56" width="0.86" height="1.0" fill="#3060e0"/><rect x="641.00" y="132.00" width="4.30" height="1.0" fill="#8b2020"/><rect x="646.16" y="132.00" width="0.86" height="1.0" fill="#3060e0"/><rect x="644.44" y="133.71" width="6.88" height="1.0" fill="#e04040"/><rect x="652.18" y="133.71" width="4.30" height="1.0" fill="#2a7ab0"/><rect x="644.44" y="135.43" width="10.32" height="1.0" fill="#e04040"/><rect x="655.62" y="135.43" width="6.02" height="1.0" fill="#2a7ab0"/><rect x="644.44" y="137.14" width="3.44" height="1.0" fill="#e04040"/><rect x="648.74" y="137.14" width="4.30" height="1.0" fill="#2a9a70"/><rect x="644.44" y="138.86" width="8.60" height="1.0" fill="#e04040"/><rect x="653.90" y="138.86" width="6.02" height="1.0" fill="#2a9a70"/><rect x="644.44" y="140.57" width="10.32" height="1.0" fill="#e04040"/><rect x="655.62" y="140.57" width="3.44" height="1.0" fill="#2a9a70"/><rect x="644.44" y="142.29" width="12.90" height="1.0" fill="#e04040"/><rect x="658.20" y="142.29" width="3.44" height="1.0" fill="#2a9a70"/><rect x="644.44" y="144.00" width="5.16" height="1.0" fill="#e04040"/><rect x="650.46" y="144.00" width="4.30" height="1.0" fill="#2a7ab0"/><rect x="641.00" y="145.72" width="0.86" height="1.0" fill="#3060e0"/><rect x="641.00" y="149.15" width="4.30" height="1.0" fill="#8b2020"/><rect x="646.16" y="149.15" width="2.58" height="1.0" fill="#8b2020"/><rect x="649.60" y="149.15" width="0.86" height="1.0" fill="#3060e0"/><rect x="644.44" y="150.86" width="6.02" height="1.0" fill="#e04040"/><rect x="651.32" y="150.86" width="4.30" height="1.0" fill="#2a9a70"/><rect x="644.44" y="152.57" width="5.16" height="1.0" fill="#e04040"/><rect x="650.46" y="152.57" width="4.30" height="1.0" fill="#2a7ab0"/><rect x="644.44" y="154.29" width="12.04" height="1.0" fill="#e04040"/><rect x="657.34" y="154.29" width="3.44" height="1.0" fill="#2a9a70"/><rect x="644.44" y="156.00" width="6.02" height="1.0" fill="#e04040"/><rect x="651.32" y="156.00" width="4.30" height="1.0" fill="#2a7ab0"/><rect x="641.00" y="157.72" width="0.86" height="1.0" fill="#3060e0"/><rect x="641.00" y="161.15" width="2.58" height="1.0" fill="#8b2020"/><rect x="644.44" y="161.15" width="0.86" height="1.0" fill="#8b2020"/><rect x="646.16" y="161.15" width="0.86" height="1.0" fill="#3060e0"/><rect x="644.44" y="162.87" width="5.16" height="1.0" fill="#e04040"/><rect x="650.46" y="162.87" width="15.48" height="1.0" fill="#2a7ab0"/><rect x="644.44" y="164.58" width="13.76" height="1.0" fill="#e04040"/><rect x="659.06" y="164.58" width="4.30" height="1.0" fill="#2a7ab0"/><rect x="644.44" y="166.30" width="10.32" height="1.0" fill="#e04040"/><rect x="655.62" y="166.30" width="4.30" height="1.0" fill="#2a9a70"/><rect x="644.44" y="168.01" width="10.32" height="1.0" fill="#e04040"/><rect x="655.62" y="168.01" width="3.44" height="1.0" fill="#2a9a70"/><rect x="644.44" y="169.73" width="12.90" height="1.0" fill="#e04040"/><rect x="658.20" y="169.73" width="8.60" height="1.0" fill="#2a7ab0"/><rect x="644.44" y="171.44" width="8.60" height="1.0" fill="#e04040"/><rect x="653.90" y="171.44" width="6.02" height="1.0" fill="#2a9a70"/><rect x="644.44" y="173.16" width="9.46" height="1.0" fill="#e04040"/><rect x="654.76" y="173.16" width="4.30" height="1.0" fill="#2a9a70"/><rect x="659.92" y="173.16" width="3.44" height="1.0" fill="#2a9a70"/><rect x="664.22" y="173.16" width="4.30" height="1.0" fill="#2a9a70"/><rect x="641.00" y="174.87" width="0.86" height="1.0" fill="#3060e0"/><rect x="641.00" y="178.30" width="2.58" height="1.0" fill="#8b2020"/><rect x="644.44" y="178.30" width="6.02" height="1.0" fill="#8b2020"/><rect x="651.32" y="178.30" width="0.86" height="1.0" fill="#3060e0"/><rect x="644.44" y="180.02" width="5.16" height="1.0" fill="#e04040"/><rect x="650.46" y="180.02" width="4.30" height="1.0" fill="#2a7ab0"/><rect x="641.00" y="181.73" width="0.86" height="1.0" fill="#3060e0"/><rect x="641.00" y="185.16" width="6.02" height="1.0" fill="#8b2020"/><rect x="647.88" y="185.16" width="0.86" height="1.0" fill="#3060e0"/><rect x="644.44" y="186.88" width="6.88" height="1.0" fill="#e04040"/><rect x="652.18" y="186.88" width="3.44" height="1.0" fill="#2a9a70"/><rect x="656.48" y="186.88" width="3.44" height="1.0" fill="#2a9a70"/><rect x="644.44" y="188.59" width="9.46" height="1.0" fill="#e04040"/><rect x="654.76" y="188.59" width="5.16" height="1.0" fill="#2a9a70"/><rect x="644.44" y="190.31" width="6.88" height="1.0" fill="#e04040"/><rect x="652.18" y="190.31" width="4.30" height="1.0" fill="#2a7ab0"/><rect x="644.44" y="192.02" width="12.90" height="1.0" fill="#e04040"/><rect x="658.20" y="192.02" width="6.02" height="1.0" fill="#2a7ab0"/><rect x="644.44" y="193.74" width="13.76" height="1.0" fill="#e04040"/><rect x="659.06" y="193.74" width="6.02" height="1.0" fill="#2a7ab0"/><rect x="641.00" y="195.45" width="0.86" height="1.0" fill="#3060e0"/><rect x="641.00" y="198.88" width="4.30" height="1.0" fill="#8b2020"/><rect x="646.16" y="198.88" width="0.86" height="1.0" fill="#3060e0"/><rect x="644.44" y="200.60" width="10.32" height="1.0" fill="#e04040"/><rect x="655.62" y="200.60" width="6.02" height="1.0" fill="#2a7ab0"/><rect x="644.44" y="202.31" width="9.46" height="1.0" fill="#e04040"/><rect x="654.76" y="202.31" width="6.02" height="1.0" fill="#2a7ab0"/><rect x="641.00" y="204.03" width="0.86" height="1.0" fill="#3060e0"/><rect x="641.00" y="207.46" width="4.30" height="1.0" fill="#8b2020"/><rect x="646.16" y="207.46" width="1.72" height="1.0" fill="#8b2020"/><rect x="648.74" y="207.46" width="0.86" height="1.0" fill="#3060e0"/><rect x="644.44" y="209.17" width="8.60" height="1.0" fill="#e04040"/><rect x="653.90" y="209.17" width="4.30" height="1.0" fill="#2a9a70"/><rect x="644.44" y="210.89" width="10.32" height="1.0" fill="#e04040"/><rect x="655.62" y="210.89" width="3.44" height="1.0" fill="#2a9a70"/><rect x="644.44" y="212.60" width="12.04" height="1.0" fill="#e04040"/><rect x="657.34" y="212.60" width="4.30" height="1.0" fill="#2a9a70"/><rect x="644.44" y="214.32" width="12.90" height="1.0" fill="#e04040"/><rect x="658.20" y="214.32" width="3.44" height="1.0" fill="#2a9a70"/><rect x="641.00" y="216.03" width="0.86" height="1.0" fill="#3060e0"/><rect x="641.00" y="219.46" width="4.30" height="1.0" fill="#8b2020"/><rect x="646.16" y="219.46" width="0.86" height="1.0" fill="#8b2020"/><rect x="647.88" y="219.46" width="0.86" height="1.0" fill="#3060e0"/><rect x="644.44" y="221.18" width="8.60" height="1.0" fill="#e04040"/><rect x="653.90" y="221.18" width="6.02" height="1.0" fill="#2a9a70"/><rect x="644.44" y="222.89" width="5.16" height="1.0" fill="#e04040"/><rect x="650.46" y="222.89" width="4.30" height="1.0" fill="#2a7ab0"/><rect x="644.44" y="224.61" width="8.60" height="1.0" fill="#e04040"/><rect x="653.90" y="224.61" width="5.16" height="1.0" fill="#2a9a70"/><rect x="641.00" y="226.32" width="0.86" height="1.0" fill="#3060e0"/><rect x="641.00" y="229.75" width="6.88" height="1.0" fill="#8b2020"/><rect x="648.74" y="229.75" width="2.58" height="1.0" fill="#8b2020"/><rect x="652.18" y="229.75" width="6.88" height="1.0" fill="#8b2020"/><rect x="659.92" y="229.75" width="1.72" height="1.0" fill="#8b2020"/><rect x="662.50" y="229.75" width="0.86" height="1.0" fill="#3060e0"/><rect x="644.44" y="231.47" width="8.60" height="1.0" fill="#e04040"/><rect x="653.90" y="231.47" width="6.02" height="1.0" fill="#2a9a70"/><rect x="644.44" y="233.18" width="12.04" height="1.0" fill="#e04040"/><rect x="657.34" y="233.18" width="4.30" height="1.0" fill="#2a9a70"/><rect x="644.44" y="234.90" width="9.46" height="1.0" fill="#e04040"/><rect x="654.76" y="234.90" width="6.02" height="1.0" fill="#2a7ab0"/><rect x="644.44" y="236.61" width="10.32" height="1.0" fill="#e04040"/><rect x="655.62" y="236.61" width="3.44" height="1.0" fill="#2a9a70"/><rect x="641.00" y="238.33" width="0.86" height="1.0" fill="#3060e0"/><rect x="641.00" y="241.76" width="11.18" height="1.0" fill="#8b2020"/><rect x="653.04" y="241.76" width="0.86" height="1.0" fill="#3060e0"/><rect x="644.44" y="243.47" width="6.88" height="1.0" fill="#e04040"/><rect x="652.18" y="243.47" width="4.30" height="1.0" fill="#2a7ab0"/><rect x="644.44" y="245.19" width="18.92" height="1.0" fill="#e04040"/><rect x="664.22" y="245.19" width="13.76" height="1.0" fill="#2a9a70"/><rect x="678.84" y="245.19" width="11.18" height="1.0" fill="#2a9a70"/><rect x="690.88" y="245.19" width="5.16" height="1.0" fill="#2a9a70"/><rect x="644.44" y="246.90" width="3.44" height="1.0" fill="#e04040"/><rect x="648.74" y="246.90" width="6.02" height="1.0" fill="#2a9a70"/><rect x="644.44" y="248.62" width="5.16" height="1.0" fill="#e04040"/><rect x="650.46" y="248.62" width="4.30" height="1.0" fill="#2a9a70"/><rect x="644.44" y="250.33" width="8.60" height="1.0" fill="#e04040"/><rect x="653.90" y="250.33" width="6.02" height="1.0" fill="#2a9a70"/><rect x="641.00" y="252.05" width="0.86" height="1.0" fill="#3060e0"/><rect x="641.00" y="255.48" width="11.18" height="1.0" fill="#8b2020"/><rect x="653.04" y="255.48" width="0.86" height="1.0" fill="#3060e0"/><rect x="644.44" y="257.19" width="7.74" height="1.0" fill="#e04040"/><rect x="653.04" y="257.19" width="7.74" height="1.0" fill="#2a7ab0"/><rect x="644.44" y="258.90" width="7.74" height="1.0" fill="#e04040"/><rect x="653.04" y="258.90" width="6.02" height="1.0" fill="#2a7ab0"/><rect x="644.44" y="260.62" width="11.18" height="1.0" fill="#e04040"/><rect x="656.48" y="260.62" width="1.72" height="1.0" fill="#2a9a70"/><rect x="644.44" y="262.34" width="6.02" height="1.0" fill="#e04040"/><rect x="651.32" y="262.34" width="6.88" height="1.0" fill="#2a7ab0"/><rect x="644.44" y="264.05" width="9.46" height="1.0" fill="#e04040"/><rect x="654.76" y="264.05" width="4.30" height="1.0" fill="#2a9a70"/><rect x="641.00" y="265.76" width="0.86" height="1.0" fill="#3060e0"/><rect x="641.00" y="269.20" width="11.18" height="1.0" fill="#8b2020"/><rect x="653.04" y="269.20" width="2.58" height="1.0" fill="#8b2020"/><rect x="656.48" y="269.20" width="0.86" height="1.0" fill="#3060e0"/><rect x="644.44" y="270.91" width="5.16" height="1.0" fill="#e04040"/><rect x="650.46" y="270.91" width="4.30" height="1.0" fill="#2a9a70"/><rect x="644.44" y="272.62" width="6.02" height="1.0" fill="#e04040"/><rect x="651.32" y="272.62" width="4.30" height="1.0" fill="#2a9a70"/><rect x="644.44" y="274.34" width="9.46" height="1.0" fill="#e04040"/><rect x="654.76" y="274.34" width="5.16" height="1.0" fill="#2a7ab0"/><rect x="644.44" y="276.06" width="9.46" height="1.0" fill="#e04040"/><rect x="654.76" y="276.06" width="7.74" height="1.0" fill="#2a9a70"/><rect x="663.36" y="276.06" width="3.44" height="1.0" fill="#2a9a70"/><rect x="667.66" y="276.06" width="4.30" height="1.0" fill="#2a9a70"/><rect x="641.00" y="277.77" width="0.86" height="1.0" fill="#3060e0"/><rect x="641.00" y="281.20" width="16.34" height="1.0" fill="#8b2020"/><rect x="658.20" y="281.20" width="2.58" height="1.0" fill="#8b2020"/><rect x="661.64" y="281.20" width="0.86" height="1.0" fill="#3060e0"/><rect x="644.44" y="282.92" width="8.60" height="1.0" fill="#e04040"/><rect x="653.90" y="282.92" width="10.32" height="1.0" fill="#2a9a70"/><rect x="641.00" y="284.63" width="0.86" height="1.0" fill="#3060e0"/><rect x="641.00" y="288.06" width="11.18" height="1.0" fill="#8b2020"/><rect x="653.04" y="288.06" width="0.86" height="1.0" fill="#3060e0"/><rect x="644.44" y="289.77" width="8.60" height="1.0" fill="#e04040"/><rect x="653.90" y="289.77" width="5.16" height="1.0" fill="#2a9a70"/><rect x="644.44" y="291.49" width="5.16" height="1.0" fill="#e04040"/><rect x="650.46" y="291.49" width="4.30" height="1.0" fill="#2a9a70"/><rect x="644.44" y="293.21" width="6.02" height="1.0" fill="#e04040"/><rect x="651.32" y="293.21" width="0.86" height="1.0" fill="#2a9a70"/><rect x="653.04" y="293.21" width="4.30" height="1.0" fill="#2a9a70"/><rect x="641.00" y="294.92" width="0.86" height="1.0" fill="#3060e0"/><rect x="641.00" y="298.35" width="9.46" height="1.0" fill="#8b2020"/><rect x="651.32" y="298.35" width="0.86" height="1.0" fill="#3060e0"/><rect x="644.44" y="300.07" width="12.04" height="1.0" fill="#e04040"/><rect x="657.34" y="300.07" width="6.02" height="1.0" fill="#2a9a70"/><rect x="641.00" y="301.78" width="0.86" height="1.0" fill="#3060e0"/><rect x="641.00" y="305.21" width="4.30" height="1.0" fill="#8b2020"/><rect x="646.16" y="305.21" width="0.86" height="1.0" fill="#3060e0"/><rect x="644.44" y="306.93" width="6.88" height="1.0" fill="#e04040"/><rect x="652.18" y="306.93" width="5.16" height="1.0" fill="#2a7ab0"/><rect x="644.44" y="308.64" width="12.04" height="1.0" fill="#e04040"/><rect x="657.34" y="308.64" width="6.02" height="1.0" fill="#2a9a70"/><rect x="644.44" y="310.36" width="5.16" height="1.0" fill="#e04040"/><rect x="650.46" y="310.36" width="4.30" height="1.0" fill="#2a7ab0"/><rect x="644.44" y="312.07" width="8.60" height="1.0" fill="#e04040"/><rect x="653.90" y="312.07" width="6.02" height="1.0" fill="#2a9a70"/><rect x="641.00" y="313.79" width="0.86" height="1.0" fill="#3060e0"/><rect x="641.00" y="317.22" width="5.16" height="1.0" fill="#8b2020"/><rect x="647.02" y="317.22" width="6.88" height="1.0" fill="#8b2020"/><rect x="654.76" y="317.22" width="0.86" height="1.0" fill="#3060e0"/><rect x="644.44" y="318.93" width="5.16" height="1.0" fill="#e04040"/><rect x="650.46" y="318.93" width="4.30" height="1.0" fill="#2a9a70"/><rect x="644.44" y="320.64" width="6.88" height="1.0" fill="#e04040"/><rect x="652.18" y="320.64" width="4.30" height="1.0" fill="#2a9a70"/><rect x="644.44" y="322.36" width="14.62" height="1.0" fill="#e04040"/><rect x="659.92" y="322.36" width="6.88" height="1.0" fill="#2a9a70"/><rect x="644.44" y="324.08" width="6.02" height="1.0" fill="#e04040"/><rect x="651.32" y="324.08" width="2.58" height="1.0" fill="#2a9a70"/><rect x="654.76" y="324.08" width="4.30" height="1.0" fill="#2a9a70"/><rect x="659.92" y="324.08" width="4.30" height="1.0" fill="#2a9a70"/><rect x="644.44" y="325.79" width="5.16" height="1.0" fill="#e04040"/><rect x="650.46" y="325.79" width="15.48" height="1.0" fill="#2a7ab0"/><rect x="644.44" y="327.50" width="10.32" height="1.0" fill="#e04040"/><rect x="655.62" y="327.50" width="6.88" height="1.0" fill="#2a7ab0"/><rect x="644.44" y="329.22" width="8.60" height="1.0" fill="#e04040"/><rect x="653.90" y="329.22" width="4.30" height="1.0" fill="#2a9a70"/><rect x="644.44" y="330.94" width="12.04" height="1.0" fill="#e04040"/><rect x="657.34" y="330.94" width="1.72" height="1.0" fill="#2a9a70"/><rect x="644.44" y="332.65" width="6.88" height="1.0" fill="#e04040"/><rect x="652.18" y="332.65" width="4.30" height="1.0" fill="#2a7ab0"/><rect x="644.44" y="334.37" width="6.02" height="1.0" fill="#e04040"/><rect x="651.32" y="334.37" width="7.74" height="1.0" fill="#2a7ab0"/><rect x="644.44" y="336.08" width="9.46" height="1.0" fill="#e04040"/><rect x="654.76" y="336.08" width="10.32" height="1.0" fill="#2a9a70"/><rect x="665.94" y="336.08" width="4.30" height="1.0" fill="#2a9a70"/><rect x="641.00" y="337.80" width="0.86" height="1.0" fill="#3060e0"/><rect x="641.00" y="341.23" width="10.32" height="1.0" fill="#8b2020"/><rect x="652.18" y="341.23" width="12.04" height="1.0" fill="#8b2020"/><rect x="665.08" y="341.23" width="0.86" height="1.0" fill="#3060e0"/><rect x="644.44" y="342.94" width="6.88" height="1.0" fill="#e04040"/><rect x="652.18" y="342.94" width="4.30" height="1.0" fill="#2a7ab0"/><rect x="644.44" y="344.65" width="11.18" height="1.0" fill="#e04040"/><rect x="656.48" y="344.65" width="4.30" height="1.0" fill="#2a9a70"/><rect x="641.00" y="346.37" width="0.86" height="1.0" fill="#3060e0"/><rect x="641.00" y="349.80" width="5.16" height="1.0" fill="#8b2020"/><rect x="647.02" y="349.80" width="0.86" height="1.0" fill="#3060e0"/><rect x="644.44" y="351.51" width="6.88" height="1.0" fill="#e04040"/><rect x="652.18" y="351.51" width="3.44" height="1.0" fill="#2a9a70"/><rect x="656.48" y="351.51" width="4.30" height="1.0" fill="#2a9a70"/><rect x="644.44" y="353.23" width="9.46" height="1.0" fill="#e04040"/><rect x="654.76" y="353.23" width="10.32" height="1.0" fill="#2a7ab0"/><rect x="644.44" y="354.95" width="6.02" height="1.0" fill="#e04040"/><rect x="651.32" y="354.95" width="2.58" height="1.0" fill="#2a9a70"/><rect x="654.76" y="354.95" width="4.30" height="1.0" fill="#2a9a70"/><rect x="659.92" y="354.95" width="15.48" height="1.0" fill="#2a9a70"/><rect x="644.44" y="356.66" width="5.16" height="1.0" fill="#e04040"/><rect x="650.46" y="356.66" width="15.48" height="1.0" fill="#2a7ab0"/><rect x="644.44" y="358.38" width="6.02" height="1.0" fill="#e04040"/><rect x="651.32" y="358.38" width="6.88" height="1.0" fill="#2a7ab0"/><rect x="644.44" y="360.09" width="8.60" height="1.0" fill="#e04040"/><rect x="653.90" y="360.09" width="4.30" height="1.0" fill="#2a9a70"/><rect x="644.44" y="361.81" width="12.90" height="1.0" fill="#e04040"/><rect x="658.20" y="361.81" width="8.60" height="1.0" fill="#2a7ab0"/><rect x="644.44" y="363.52" width="12.90" height="1.0" fill="#e04040"/><rect x="658.20" y="363.52" width="3.44" height="1.0" fill="#2a9a70"/><rect x="644.44" y="365.24" width="9.46" height="1.0" fill="#e04040"/><rect x="654.76" y="365.24" width="8.60" height="1.0" fill="#2a9a70"/><rect x="664.22" y="365.24" width="3.44" height="1.0" fill="#2a9a70"/><rect x="668.52" y="365.24" width="4.30" height="1.0" fill="#2a9a70"/><rect x="673.68" y="365.24" width="4.30" height="1.0" fill="#2a9a70"/><rect x="678.84" y="365.24" width="3.44" height="1.0" fill="#2a9a70"/><rect x="683.14" y="365.24" width="4.30" height="1.0" fill="#2a9a70"/><rect x="644.44" y="366.95" width="9.46" height="1.0" fill="#e04040"/><rect x="654.76" y="366.95" width="4.30" height="1.0" fill="#2a9a70"/><rect x="644.44" y="368.66" width="5.16" height="1.0" fill="#e04040"/><rect x="650.46" y="368.66" width="4.30" height="1.0" fill="#2a9a70"/><rect x="644.44" y="370.38" width="10.32" height="1.0" fill="#e04040"/><rect x="655.62" y="370.38" width="6.88" height="1.0" fill="#2a7ab0"/><rect x="644.44" y="372.10" width="10.32" height="1.0" fill="#e04040"/><rect x="655.62" y="372.10" width="3.44" height="1.0" fill="#2a9a70"/><rect x="641.00" y="373.81" width="0.86" height="1.0" fill="#3060e0"/><rect x="641.00" y="377.24" width="10.32" height="1.0" fill="#8b2020"/><rect x="652.18" y="377.24" width="0.86" height="1.0" fill="#3060e0"/><rect x="644.44" y="378.96" width="9.46" height="1.0" fill="#e04040"/><rect x="654.76" y="378.96" width="15.48" height="1.0" fill="#2a7ab0"/><rect x="644.44" y="380.67" width="5.16" height="1.0" fill="#e04040"/><rect x="650.46" y="380.67" width="13.76" height="1.0" fill="#2a7ab0"/><rect x="641.00" y="382.38" width="0.86" height="1.0" fill="#3060e0"/><rect x="641.00" y="385.82" width="5.16" height="1.0" fill="#8b2020"/><rect x="647.02" y="385.82" width="0.86" height="1.0" fill="#3060e0"/><rect x="644.44" y="387.53" width="9.46" height="1.0" fill="#e04040"/><rect x="654.76" y="387.53" width="6.02" height="1.0" fill="#2a7ab0"/><rect x="644.44" y="389.25" width="6.88" height="1.0" fill="#e04040"/><rect x="652.18" y="389.25" width="4.30" height="1.0" fill="#2a9a70"/><rect x="644.44" y="390.96" width="5.16" height="1.0" fill="#e04040"/><rect x="650.46" y="390.96" width="4.30" height="1.0" fill="#2a9a70"/><rect x="644.44" y="392.68" width="8.60" height="1.0" fill="#e04040"/><rect x="653.90" y="392.68" width="6.02" height="1.0" fill="#2a9a70"/><rect x="644.44" y="394.39" width="9.46" height="1.0" fill="#e04040"/><rect x="654.76" y="394.39" width="2.58" height="1.0" fill="#2a9a70"/><rect x="658.20" y="394.39" width="4.30" height="1.0" fill="#2a9a70"/><rect x="663.36" y="394.39" width="4.30" height="1.0" fill="#2a9a70"/><rect x="641.00" y="396.11" width="0.86" height="1.0" fill="#3060e0"/><rect x="641.00" y="399.53" width="1.72" height="1.0" fill="#4a9a4a"/><rect x="643.58" y="399.53" width="8.60" height="1.0" fill="#4a9a4a"/><rect x="653.04" y="399.53" width="1.72" height="1.0" fill="#4a9a4a"/><rect x="641.00" y="401.25" width="5.16" height="1.0" fill="#a040c0"/><rect x="647.02" y="401.25" width="9.46" height="1.0" fill="#a040c0"/><rect x="657.34" y="401.25" width="5.16" height="1.0" fill="#a040c0"/><rect x="663.36" y="401.25" width="0.86" height="1.0" fill="#a040c0"/><rect x="644.44" y="402.97" width="5.16" height="1.0" fill="#e04040"/><rect x="650.46" y="402.97" width="0.86" height="1.0" fill="#e04040"/><rect x="652.18" y="402.97" width="12.90" height="1.0" fill="#e04040"/><rect x="665.94" y="402.97" width="6.02" height="1.0" fill="#2a9a70"/><rect x="672.82" y="402.97" width="3.44" height="1.0" fill="#2a9a70"/><rect x="677.12" y="402.97" width="4.30" height="1.0" fill="#2a9a70"/><rect x="682.28" y="402.97" width="0.86" height="1.0" fill="#2a9a70"/><rect x="644.44" y="404.68" width="2.58" height="1.0" fill="#e04040"/><rect x="647.88" y="404.68" width="0.86" height="1.0" fill="#e04040"/><rect x="649.60" y="404.68" width="0.86" height="1.0" fill="#e04040"/><rect x="651.32" y="404.68" width="6.02" height="1.0" fill="#e04040"/><rect x="658.20" y="404.68" width="0.86" height="1.0" fill="#2a9a70"/><rect x="659.92" y="404.68" width="6.02" height="1.0" fill="#2a9a70"/><rect x="666.80" y="404.68" width="0.86" height="1.0" fill="#2a9a70"/><rect x="641.00" y="406.39" width="0.86" height="1.0" fill="#3060e0"/><rect x="641.00" y="409.83" width="5.16" height="1.0" fill="#a040c0"/><rect x="647.02" y="409.83" width="9.46" height="1.0" fill="#a040c0"/><rect x="657.34" y="409.83" width="5.16" height="1.0" fill="#a040c0"/><rect x="663.36" y="409.83" width="0.86" height="1.0" fill="#a040c0"/><rect x="644.44" y="411.54" width="4.30" height="1.0" fill="#e04040"/><rect x="649.60" y="411.54" width="1.72" height="1.0" fill="#e04040"/><rect x="652.18" y="411.54" width="0.86" height="1.0" fill="#e04040"/><rect x="653.90" y="411.54" width="8.60" height="1.0" fill="#e04040"/><rect x="663.36" y="411.54" width="6.02" height="1.0" fill="#2a9a70"/><rect x="670.24" y="411.54" width="0.86" height="1.0" fill="#2a9a70"/><rect x="641.00" y="413.25" width="0.86" height="1.0" fill="#3060e0"/></svg></div><div style="position:absolute;left:690px;top:76px;width:11px;height:588px;background:#ffffff;border-left:1px solid #f0f0f0;box-sizing:border-box;"></div><div style="position:absolute;left:690px;top:75px;width:11px;height:1.8px;background:#555;"></div><div style="position:absolute;left:694px;top:77px;width:4.5px;height:2.8px;background:#bbb;"></div><div style="position:absolute;left:0px;top:663px;width:1024px;height:1px;background:#e5e5e5;"></div><div style="position:absolute;left:0px;top:664px;width:1024px;height:19px;background:#f8f8f8;"></div><div style="position:absolute;left:0px;top:682px;width:1024px;height:1px;background:#c9cdd3;"></div><div style="position:absolute;left:0px;top:682px;width:313px;height:1px;background:#2b3a55;"></div><div class="t" style="left:60.00px;top:668.63px;font-size:10px;color:#444;transform:scaleX(0.8559);transform-origin:0 0;">14</div><div class="t" style="left:90.00px;top:668.63px;font-size:10px;color:#444;transform:scaleX(0.9175);transform-origin:0 0;">10K+</div><div class="t" style="left:132.80px;top:668.63px;font-size:10px;color:#444;transform:scaleX(0.8327);transform-origin:0 0;">3K</div><div class="t" style="left:666.30px;top:668.57px;font-size:10.2px;color:#444;transform:scaleX(0.9267);transform-origin:0 0;">Ln 1, Col 1</div><div class="t" style="left:726.90px;top:668.57px;font-size:10.2px;color:#444;transform:scaleX(0.9043);transform-origin:0 0;">Spaces: 4</div><div class="t" style="left:782.30px;top:668.57px;font-size:10.2px;color:#444;transform:scaleX(0.8991);transform-origin:0 0;">UTF-8</div><div class="t" style="left:822.60px;top:668.57px;font-size:10.2px;color:#444;transform:scaleX(0.7742);transform-origin:0 0;">LF</div><div class="t" style="left:864.40px;top:668.57px;font-size:10.2px;color:#444;transform:scaleX(0.8110);transform-origin:0 0;">CSS</div><div class="t" style="left:895.50px;top:668.57px;font-size:10.2px;color:#444;transform:scaleX(1.0071);transform-origin:0 0;">Antigravity - Settings</div><svg style="position:absolute;left:0;top:0;pointer-events:none" width="1024" height="683" viewBox="0 0 1024 683">
<defs><linearGradient id="lg1" x1="0" y1="0" x2="0" y2="1"><stop offset="0" stop-color="#9fd0e8"/><stop offset="1" stop-color="#2a6fb8"/></linearGradient></defs>
<rect x="11" y="8" width="14" height="14" fill="#0c1220"/>
<path d="M13.2 20.2 L18 10.3 L22.8 20.2 L20.6 20.2 L18 14.6 L15.4 20.2 Z" fill="url(#lg1)"/>
<g fill="none" stroke="#424242" stroke-width="1.1">
 <rect x="720.8" y="10.6" width="3.6" height="9.4" rx="1"/>
 <rect x="727.8" y="10.9" width="3.2" height="3" rx="1.2"/>
 <rect x="727.8" y="16.7" width="3.2" height="3" rx="1.2"/>
 <rect x="740.2" y="10.3" width="11.6" height="10.4" rx="1.2"/>
 <rect x="760.4" y="10.3" width="11.6" height="10.4" rx="1.2"/>
 <line x1="760.4" y1="17.4" x2="772" y2="17.4"/>
</g>
<rect x="740.2" y="10.3" width="4.4" height="10.4" fill="#1e1e1e"/>
<rect x="777.6" y="6.2" width="17.6" height="18" rx="4" fill="#dedede"/>
<rect x="780.4" y="10.3" width="12.4" height="10.4" rx="1.2" fill="#d6d6d6" stroke="#424242" stroke-width="1.1"/>
<rect x="787" y="10.3" width="5.8" height="10.4" fill="#1e1e1e"/>
<g fill="none" stroke="#424242" stroke-width="1.15">
 <circle cx="809.2" cy="14.4" r="4.4"/>
 <line x1="806" y1="17.6" x2="801.6" y2="22"/>
 <line x1="821.5" y1="11" x2="821.5" y2="21" stroke="#c8c8c8"/>
</g>
<g transform="translate(0 -0.9)"><circle cx="835.1" cy="16" r="6.2" fill="#2b2b2b"/>
<circle cx="835.1" cy="16" r="3.1" fill="#f8f8f8"/>
<circle cx="835.1" cy="16" r="2.2" fill="#2b2b2b"/>
<path d="M835.1 12.9 L840.6 12.9 M832.4 17.6 L829.8 12.4 M837.8 17.6 L835 22.1" stroke="#f8f8f8" stroke-width="0.9"/>
<g fill="none" stroke="#424242" stroke-width="1.1">
 <path d="M855.5 9.7 L856.9 9.7 L857.3 11.4 L858.6 12 L860.1 11.1 L861.1 12.1 L860.2 13.6 L860.8 14.9 L862.4 15.3 L862.4 16.7 L860.8 17.1 L860.2 18.4 L861.1 19.9 L860.1 20.9 L858.6 20 L857.3 20.6 L856.9 22.3 L855.5 22.3 L855.1 20.6 L853.8 20 L852.3 20.9 L851.3 19.9 L852.2 18.4 L851.6 17.1 L850 16.7 L850 15.3 L851.6 14.9 L852.2 13.6 L851.3 12.1 L852.3 11.1 L853.8 12 L855.1 11.4 Z"/>
 <circle cx="856.2" cy="16" r="2"/>
</g>
<circle cx="878.2" cy="16" r="6.6" fill="#a347c9"/>
<text x="878.2" y="18.2" font-size="6" fill="#f3e6f8" text-anchor="middle" font-family="Liberation Sans">s</text>
<path d="M889 14.2 L893 18 L897 14.2" fill="none" stroke="#424242" stroke-width="1.1"/>
</g>
<g fill="none" stroke="#3a3a3a" stroke-width="1">
 <line x1="921" y1="15" x2="930.5" y2="15"/>
 <rect x="960.5" y="11.5" width="8.5" height="8.5"/>
 <path d="M999.3 10.8 L1008 19.5 M1008 10.8 L999.3 19.5"/>
</g>
</svg><svg style="position:absolute;left:0;top:0;pointer-events:none" width="1024" height="683" viewBox="0 0 1024 683">
<rect x="8" y="36" width="24.5" height="24.5" rx="4" fill="#e4e4e4"/>
<g fill="none" stroke="#3b3b3b" stroke-width="1.3" stroke-linejoin="round">
 <path d="M17.2 44.6 L14 44.6 L14 55.6 L22.6 55.6 L22.6 51.6"/>
 <path d="M17.6 41.2 L23.6 41.2 L26.6 44.2 L26.6 51.6 L17.6 51.6 Z" fill="#f3f3f3"/>
 <path d="M23.4 41.2 L23.4 44.4 L26.6 44.4"/>
</g>
<g fill="none" stroke="#5f5f5f" stroke-width="1.15">
 <circle cx="22.2" cy="81.6" r="5.3"/>
 <line x1="18.4" y1="85.4" x2="13.8" y2="90.8"/>
 <circle cx="17.2" cy="115" r="1.9"/>
 <circle cx="24.1" cy="118" r="1.9"/>
 <circle cx="17.2" cy="125.5" r="1.9"/>
 <line x1="17.2" y1="116.9" x2="17.2" y2="123.6"/>
 <path d="M24.1 119.9 Q24.1 122.4 17.2 123.4"/>
 <path d="M18.2 154.6 L18.2 148.6 L27.6 154.4 L21.4 158.4" stroke-width="1.2"/>
 <path d="M14.2 157.6 L18.6 157.6" stroke-width="1.3"/>
 <ellipse cx="16.4" cy="160.6" rx="2.4" ry="2.7" stroke-width="1.2"/>
 <path d="M12.8 159 L14 159.6 M20 159 L18.8 159.6 M12.8 163.4 L14 162.4 M20 163.4 L18.8 162.4" stroke-width="1"/>
 <path d="M23.6 195 L14 195 L14 186 L27 186 L27 190.6"/>
 <line x1="16.6" y1="198.6" x2="20" y2="198.6"/>
 <circle cx="24" cy="195.6" r="3.4"/>
 <path d="M22.8 196.8 L25.2 194.4"/>
 <path d="M14.6 226.6 L20.6 226.6 L20.6 233.6 L14.6 233.6 Z M14.6 226.6 L14.6 221.6 L20.6 221.6 L20.6 226.6 M20.6 228 L27.4 228 L27.4 233.6 L20.6 233.6"/>
 <path d="M24.6 220.4 L28 223.8 L24.6 227.2 L21.2 223.8 Z"/>
 <path d="M17.8 256.6 L23.2 256.6 M18.6 256.8 L18.6 261.6 L14.6 269.4 L26.2 269.4 L22.2 261.6 L22.2 256.8"/>
 <path d="M16.4 265.6 L24.4 265.6" stroke-width="0.9"/>
</g>
</svg><svg style="position:absolute;left:0;top:0;pointer-events:none" width="1024" height="683" viewBox="0 0 1024 683"><g fill="none" stroke="#555" stroke-width="1.1"><path d="M181.6 46 h1 M186.4 46 h1 M191.2 46 h1" stroke-width="1.8"/></g><path d="M43 69 L47 73 L51 69" fill="none" stroke="#555" stroke-width="1.05"/><path d="M45.2 142 L49 146 L45.2 150" fill="none" stroke="#555" stroke-width="1.05"/><path d="M43 163 L47 167 L51 163" fill="none" stroke="#555" stroke-width="1.05"/><path d="M45.2 651 L49 655 L45.2 659" fill="none" stroke="#555" stroke-width="1.05"/><path d="M66.6 87.10000000000001 L63.8 89.60000000000001 L66.6 92.2 M72 87.10000000000001 L74.8 89.60000000000001 L72 92.2 M70.6 85.9 L67.8 93.9" fill="none" stroke="#d4834e" stroke-width="1.3"/><text x="63.2" y="110.6" font-size="8" font-weight="700" fill="#e8b53e" font-family="Liberation Sans">JS</text><path d="M50.2 123.2 L57 130 M57 123.2 L50.2 130" stroke="#555" stroke-width="0.95" fill="none"/><text x="63.6" y="130.4" font-size="10" fill="#519aba" font-family="Liberation Sans" stroke="#519aba" stroke-width="0.3">{ }</text><path transform="translate(63.6 175.7) scale(0.8125)" d="M11.34 9.71h.71l2.67-2.67v-.71L13.38 5h-.7l-1.82 1.81h-5V5.56l1.86-1.86V3l-2-2H5L1 5v.71l2 2h.71l1.14-1.15v5.79l.5.5H10v.52l1.33 1.34h.71l2.67-2.67v-.71L13.37 10h-.7l-1.86 1.85h-5v-4H10v.48l1.34 1.38zm1.69-3.65l.63.63-2 2-.63-.63 2-2zm0 5l.63.63-2 2-.63-.63 2-2zM3.35 6.65l-1.29-1.3 3.29-3.29 1.3 1.29-3.3 3.3z" fill="#d4993a" stroke="#d4993a" stroke-width="0.35"/><path transform="translate(63.6 194.39999999999998) scale(0.8125)" d="M11.34 9.71h.71l2.67-2.67v-.71L13.38 5h-.7l-1.82 1.81h-5V5.56l1.86-1.86V3l-2-2H5L1 5v.71l2 2h.71l1.14-1.15v5.79l.5.5H10v.52l1.33 1.34h.71l2.67-2.67v-.71L13.37 10h-.7l-1.86 1.85h-5v-4H10v.48l1.34 1.38zm1.69-3.65l.63.63-2 2-.63-.63 2-2zm0 5l.63.63-2 2-.63-.63 2-2zM3.35 6.65l-1.29-1.3 3.29-3.29 1.3 1.29-3.3 3.3z" fill="#d4993a" stroke="#d4993a" stroke-width="0.35"/><path transform="translate(63.6 213.1) scale(0.8125)" d="M11.34 9.71h.71l2.67-2.67v-.71L13.38 5h-.7l-1.82 1.81h-5V5.56l1.86-1.86V3l-2-2H5L1 5v.71l2 2h.71l1.14-1.15v5.79l.5.5H10v.52l1.33 1.34h.71l2.67-2.67v-.71L13.37 10h-.7l-1.86 1.85h-5v-4H10v.48l1.34 1.38zm1.69-3.65l.63.63-2 2-.63-.63 2-2zm0 5l.63.63-2 2-.63-.63 2-2zM3.35 6.65l-1.29-1.3 3.29-3.29 1.3 1.29-3.3 3.3z" fill="#d4993a" stroke="#d4993a" stroke-width="0.35"/><path transform="translate(63.6 231.79999999999998) scale(0.8125)" d="M11.34 9.71h.71l2.67-2.67v-.71L13.38 5h-.7l-1.82 1.81h-5V5.56l1.86-1.86V3l-2-2H5L1 5v.71l2 2h.71l1.14-1.15v5.79l.5.5H10v.52l1.33 1.34h.71l2.67-2.67v-.71L13.37 10h-.7l-1.86 1.85h-5v-4H10v.48l1.34 1.38zm1.69-3.65l.63.63-2 2-.63-.63 2-2zm0 5l.63.63-2 2-.63-.63 2-2zM3.35 6.65l-1.29-1.3 3.29-3.29 1.3 1.29-3.3 3.3z" fill="#d4993a" stroke="#d4993a" stroke-width="0.35"/><path transform="translate(63.6 250.5) scale(0.8125)" d="M11.34 9.71h.71l2.67-2.67v-.71L13.38 5h-.7l-1.82 1.81h-5V5.56l1.86-1.86V3l-2-2H5L1 5v.71l2 2h.71l1.14-1.15v5.79l.5.5H10v.52l1.33 1.34h.71l2.67-2.67v-.71L13.37 10h-.7l-1.86 1.85h-5v-4H10v.48l1.34 1.38zm1.69-3.65l.63.63-2 2-.63-.63 2-2zm0 5l.63.63-2 2-.63-.63 2-2zM3.35 6.65l-1.29-1.3 3.29-3.29 1.3 1.29-3.3 3.3z" fill="#d4993a" stroke="#d4993a" stroke-width="0.35"/><path transform="translate(63.6 269.2) scale(0.8125)" d="M11.34 9.71h.71l2.67-2.67v-.71L13.38 5h-.7l-1.82 1.81h-5V5.56l1.86-1.86V3l-2-2H5L1 5v.71l2 2h.71l1.14-1.15v5.79l.5.5H10v.52l1.33 1.34h.71l2.67-2.67v-.71L13.37 10h-.7l-1.86 1.85h-5v-4H10v.48l1.34 1.38zm1.69-3.65l.63.63-2 2-.63-.63 2-2zm0 5l.63.63-2 2-.63-.63 2-2zM3.35 6.65l-1.29-1.3 3.29-3.29 1.3 1.29-3.3 3.3z" fill="#d4993a" stroke="#d4993a" stroke-width="0.35"/><path transform="translate(63.6 287.9) scale(0.8125)" d="M11.34 9.71h.71l2.67-2.67v-.71L13.38 5h-.7l-1.82 1.81h-5V5.56l1.86-1.86V3l-2-2H5L1 5v.71l2 2h.71l1.14-1.15v5.79l.5.5H10v.52l1.33 1.34h.71l2.67-2.67v-.71L13.37 10h-.7l-1.86 1.85h-5v-4H10v.48l1.34 1.38zm1.69-3.65l.63.63-2 2-.63-.63 2-2zm0 5l.63.63-2 2-.63-.63 2-2zM3.35 6.65l-1.29-1.3 3.29-3.29 1.3 1.29-3.3 3.3z" fill="#d4993a" stroke="#d4993a" stroke-width="0.35"/><path transform="translate(63.6 306.59999999999997) scale(0.8125)" d="M11.34 9.71h.71l2.67-2.67v-.71L13.38 5h-.7l-1.82 1.81h-5V5.56l1.86-1.86V3l-2-2H5L1 5v.71l2 2h.71l1.14-1.15v5.79l.5.5H10v.52l1.33 1.34h.71l2.67-2.67v-.71L13.37 10h-.7l-1.86 1.85h-5v-4H10v.48l1.34 1.38zm1.69-3.65l.63.63-2 2-.63-.63 2-2zm0 5l.63.63-2 2-.63-.63 2-2zM3.35 6.65l-1.29-1.3 3.29-3.29 1.3 1.29-3.3 3.3z" fill="#d4993a" stroke="#d4993a" stroke-width="0.35"/><path transform="translate(63.6 325.3) scale(0.8125)" d="M11.34 9.71h.71l2.67-2.67v-.71L13.38 5h-.7l-1.82 1.81h-5V5.56l1.86-1.86V3l-2-2H5L1 5v.71l2 2h.71l1.14-1.15v5.79l.5.5H10v.52l1.33 1.34h.71l2.67-2.67v-.71L13.37 10h-.7l-1.86 1.85h-5v-4H10v.48l1.34 1.38zm1.69-3.65l.63.63-2 2-.63-.63 2-2zm0 5l.63.63-2 2-.63-.63 2-2zM3.35 6.65l-1.29-1.3 3.29-3.29 1.3 1.29-3.3 3.3z" fill="#d4993a" stroke="#d4993a" stroke-width="0.35"/><path transform="translate(63.6 343.99999999999994) scale(0.8125)" d="M11.34 9.71h.71l2.67-2.67v-.71L13.38 5h-.7l-1.82 1.81h-5V5.56l1.86-1.86V3l-2-2H5L1 5v.71l2 2h.71l1.14-1.15v5.79l.5.5H10v.52l1.33 1.34h.71l2.67-2.67v-.71L13.37 10h-.7l-1.86 1.85h-5v-4H10v.48l1.34 1.38zm1.69-3.65l.63.63-2 2-.63-.63 2-2zm0 5l.63.63-2 2-.63-.63 2-2zM3.35 6.65l-1.29-1.3 3.29-3.29 1.3 1.29-3.3 3.3z" fill="#d4993a" stroke="#d4993a" stroke-width="0.35"/><path transform="translate(63.6 362.7) scale(0.8125)" d="M11.34 9.71h.71l2.67-2.67v-.71L13.38 5h-.7l-1.82 1.81h-5V5.56l1.86-1.86V3l-2-2H5L1 5v.71l2 2h.71l1.14-1.15v5.79l.5.5H10v.52l1.33 1.34h.71l2.67-2.67v-.71L13.37 10h-.7l-1.86 1.85h-5v-4H10v.48l1.34 1.38zm1.69-3.65l.63.63-2 2-.63-.63 2-2zm0 5l.63.63-2 2-.63-.63 2-2zM3.35 6.65l-1.29-1.3 3.29-3.29 1.3 1.29-3.3 3.3z" fill="#d4993a" stroke="#d4993a" stroke-width="0.35"/><path transform="translate(63.6 381.4) scale(0.8125)" d="M11.34 9.71h.71l2.67-2.67v-.71L13.38 5h-.7l-1.82 1.81h-5V5.56l1.86-1.86V3l-2-2H5L1 5v.71l2 2h.71l1.14-1.15v5.79l.5.5H10v.52l1.33 1.34h.71l2.67-2.67v-.71L13.37 10h-.7l-1.86 1.85h-5v-4H10v.48l1.34 1.38zm1.69-3.65l.63.63-2 2-.63-.63 2-2zm0 5l.63.63-2 2-.63-.63 2-2zM3.35 6.65l-1.29-1.3 3.29-3.29 1.3 1.29-3.3 3.3z" fill="#d4993a" stroke="#d4993a" stroke-width="0.35"/><path transform="translate(63.6 400.09999999999997) scale(0.8125)" d="M11.34 9.71h.71l2.67-2.67v-.71L13.38 5h-.7l-1.82 1.81h-5V5.56l1.86-1.86V3l-2-2H5L1 5v.71l2 2h.71l1.14-1.15v5.79l.5.5H10v.52l1.33 1.34h.71l2.67-2.67v-.71L13.37 10h-.7l-1.86 1.85h-5v-4H10v.48l1.34 1.38zm1.69-3.65l.63.63-2 2-.63-.63 2-2zm0 5l.63.63-2 2-.63-.63 2-2zM3.35 6.65l-1.29-1.3 3.29-3.29 1.3 1.29-3.3 3.3z" fill="#d4993a" stroke="#d4993a" stroke-width="0.35"/><path transform="translate(63.6 418.8) scale(0.8125)" d="M11.34 9.71h.71l2.67-2.67v-.71L13.38 5h-.7l-1.82 1.81h-5V5.56l1.86-1.86V3l-2-2H5L1 5v.71l2 2h.71l1.14-1.15v5.79l.5.5H10v.52l1.33 1.34h.71l2.67-2.67v-.71L13.37 10h-.7l-1.86 1.85h-5v-4H10v.48l1.34 1.38zm1.69-3.65l.63.63-2 2-.63-.63 2-2zm0 5l.63.63-2 2-.63-.63 2-2zM3.35 6.65l-1.29-1.3 3.29-3.29 1.3 1.29-3.3 3.3z" fill="#d4993a" stroke="#d4993a" stroke-width="0.35"/><path transform="translate(63.6 437.5) scale(0.8125)" d="M11.34 9.71h.71l2.67-2.67v-.71L13.38 5h-.7l-1.82 1.81h-5V5.56l1.86-1.86V3l-2-2H5L1 5v.71l2 2h.71l1.14-1.15v5.79l.5.5H10v.52l1.33 1.34h.71l2.67-2.67v-.71L13.37 10h-.7l-1.86 1.85h-5v-4H10v.48l1.34 1.38zm1.69-3.65l.63.63-2 2-.63-.63 2-2zm0 5l.63.63-2 2-.63-.63 2-2zM3.35 6.65l-1.29-1.3 3.29-3.29 1.3 1.29-3.3 3.3z" fill="#d4993a" stroke="#d4993a" stroke-width="0.35"/><path transform="translate(63.6 456.2) scale(0.8125)" d="M11.34 9.71h.71l2.67-2.67v-.71L13.38 5h-.7l-1.82 1.81h-5V5.56l1.86-1.86V3l-2-2H5L1 5v.71l2 2h.71l1.14-1.15v5.79l.5.5H10v.52l1.33 1.34h.71l2.67-2.67v-.71L13.37 10h-.7l-1.86 1.85h-5v-4H10v.48l1.34 1.38zm1.69-3.65l.63.63-2 2-.63-.63 2-2zm0 5l.63.63-2 2-.63-.63 2-2zM3.35 6.65l-1.29-1.3 3.29-3.29 1.3 1.29-3.3 3.3z" fill="#d4993a" stroke="#d4993a" stroke-width="0.35"/><path transform="translate(63.6 474.9) scale(0.8125)" d="M11.34 9.71h.71l2.67-2.67v-.71L13.38 5h-.7l-1.82 1.81h-5V5.56l1.86-1.86V3l-2-2H5L1 5v.71l2 2h.71l1.14-1.15v5.79l.5.5H10v.52l1.33 1.34h.71l2.67-2.67v-.71L13.37 10h-.7l-1.86 1.85h-5v-4H10v.48l1.34 1.38zm1.69-3.65l.63.63-2 2-.63-.63 2-2zm0 5l.63.63-2 2-.63-.63 2-2zM3.35 6.65l-1.29-1.3 3.29-3.29 1.3 1.29-3.3 3.3z" fill="#d4993a" stroke="#d4993a" stroke-width="0.35"/><path transform="translate(63.6 493.59999999999997) scale(0.8125)" d="M11.34 9.71h.71l2.67-2.67v-.71L13.38 5h-.7l-1.82 1.81h-5V5.56l1.86-1.86V3l-2-2H5L1 5v.71l2 2h.71l1.14-1.15v5.79l.5.5H10v.52l1.33 1.34h.71l2.67-2.67v-.71L13.37 10h-.7l-1.86 1.85h-5v-4H10v.48l1.34 1.38zm1.69-3.65l.63.63-2 2-.63-.63 2-2zm0 5l.63.63-2 2-.63-.63 2-2zM3.35 6.65l-1.29-1.3 3.29-3.29 1.3 1.29-3.3 3.3z" fill="#d4993a" stroke="#d4993a" stroke-width="0.35"/><path transform="translate(63.6 512.3) scale(0.8125)" d="M11.34 9.71h.71l2.67-2.67v-.71L13.38 5h-.7l-1.82 1.81h-5V5.56l1.86-1.86V3l-2-2H5L1 5v.71l2 2h.71l1.14-1.15v5.79l.5.5H10v.52l1.33 1.34h.71l2.67-2.67v-.71L13.37 10h-.7l-1.86 1.85h-5v-4H10v.48l1.34 1.38zm1.69-3.65l.63.63-2 2-.63-.63 2-2zm0 5l.63.63-2 2-.63-.63 2-2zM3.35 6.65l-1.29-1.3 3.29-3.29 1.3 1.29-3.3 3.3z" fill="#d4993a" stroke="#d4993a" stroke-width="0.35"/><path transform="translate(63.6 531.0) scale(0.8125)" d="M11.34 9.71h.71l2.67-2.67v-.71L13.38 5h-.7l-1.82 1.81h-5V5.56l1.86-1.86V3l-2-2H5L1 5v.71l2 2h.71l1.14-1.15v5.79l.5.5H10v.52l1.33 1.34h.71l2.67-2.67v-.71L13.37 10h-.7l-1.86 1.85h-5v-4H10v.48l1.34 1.38zm1.69-3.65l.63.63-2 2-.63-.63 2-2zm0 5l.63.63-2 2-.63-.63 2-2zM3.35 6.65l-1.29-1.3 3.29-3.29 1.3 1.29-3.3 3.3z" fill="#d4993a" stroke="#d4993a" stroke-width="0.35"/><path transform="translate(63.6 549.7) scale(0.8125)" d="M11.34 9.71h.71l2.67-2.67v-.71L13.38 5h-.7l-1.82 1.81h-5V5.56l1.86-1.86V3l-2-2H5L1 5v.71l2 2h.71l1.14-1.15v5.79l.5.5H10v.52l1.33 1.34h.71l2.67-2.67v-.71L13.37 10h-.7l-1.86 1.85h-5v-4H10v.48l1.34 1.38zm1.69-3.65l.63.63-2 2-.63-.63 2-2zm0 5l.63.63-2 2-.63-.63 2-2zM3.35 6.65l-1.29-1.3 3.29-3.29 1.3 1.29-3.3 3.3z" fill="#d4993a" stroke="#d4993a" stroke-width="0.35"/><path transform="translate(63.6 568.4000000000001) scale(0.8125)" d="M11.34 9.71h.71l2.67-2.67v-.71L13.38 5h-.7l-1.82 1.81h-5V5.56l1.86-1.86V3l-2-2H5L1 5v.71l2 2h.71l1.14-1.15v5.79l.5.5H10v.52l1.33 1.34h.71l2.67-2.67v-.71L13.37 10h-.7l-1.86 1.85h-5v-4H10v.48l1.34 1.38zm1.69-3.65l.63.63-2 2-.63-.63 2-2zm0 5l.63.63-2 2-.63-.63 2-2zM3.35 6.65l-1.29-1.3 3.29-3.29 1.3 1.29-3.3 3.3z" fill="#d4993a" stroke="#d4993a" stroke-width="0.35"/><path transform="translate(63.6 587.1) scale(0.8125)" d="M11.34 9.71h.71l2.67-2.67v-.71L13.38 5h-.7l-1.82 1.81h-5V5.56l1.86-1.86V3l-2-2H5L1 5v.71l2 2h.71l1.14-1.15v5.79l.5.5H10v.52l1.33 1.34h.71l2.67-2.67v-.71L13.37 10h-.7l-1.86 1.85h-5v-4H10v.48l1.34 1.38zm1.69-3.65l.63.63-2 2-.63-.63 2-2zm0 5l.63.63-2 2-.63-.63 2-2zM3.35 6.65l-1.29-1.3 3.29-3.29 1.3 1.29-3.3 3.3z" fill="#d4993a" stroke="#d4993a" stroke-width="0.35"/><path transform="translate(63.6 605.8) scale(0.8125)" d="M11.34 9.71h.71l2.67-2.67v-.71L13.38 5h-.7l-1.82 1.81h-5V5.56l1.86-1.86V3l-2-2H5L1 5v.71l2 2h.71l1.14-1.15v5.79l.5.5H10v.52l1.33 1.34h.71l2.67-2.67v-.71L13.37 10h-.7l-1.86 1.85h-5v-4H10v.48l1.34 1.38zm1.69-3.65l.63.63-2 2-.63-.63 2-2zm0 5l.63.63-2 2-.63-.63 2-2zM3.35 6.65l-1.29-1.3 3.29-3.29 1.3 1.29-3.3 3.3z" fill="#d4993a" stroke="#d4993a" stroke-width="0.35"/><path transform="translate(63.6 624.5) scale(0.8125)" d="M11.34 9.71h.71l2.67-2.67v-.71L13.38 5h-.7l-1.82 1.81h-5V5.56l1.86-1.86V3l-2-2H5L1 5v.71l2 2h.71l1.14-1.15v5.79l.5.5H10v.52l1.33 1.34h.71l2.67-2.67v-.71L13.37 10h-.7l-1.86 1.85h-5v-4H10v.48l1.34 1.38zm1.69-3.65l.63.63-2 2-.63-.63 2-2zm0 5l.63.63-2 2-.63-.63 2-2zM3.35 6.65l-1.29-1.3 3.29-3.29 1.3 1.29-3.3 3.3z" fill="#d4993a" stroke="#d4993a" stroke-width="0.35"/></svg><svg style="position:absolute;left:0;top:0;pointer-events:none" width="1024" height="683" viewBox="0 0 1024 683"><path d="M219.6 40.699999999999996 L216.8 43.199999999999996 L219.6 45.8 M225 40.699999999999996 L227.8 43.199999999999996 L225 45.8 M223.6 39.5 L220.8 47.5" fill="none" stroke="#d4834e" stroke-width="1.3"/><text x="320.2" y="47.4" font-size="8" font-weight="700" fill="#e8b53e" font-family="Liberation Sans">JS</text><text x="421.8" y="47.8" font-size="10" fill="#519aba" font-family="Liberation Sans" stroke="#519aba" stroke-width="0.3">{ }</text><path d="M497.4 39.4 L505.4 47.4 M505.4 39.4 L497.4 47.4" stroke="#444" stroke-width="1.1" fill="none"/><path d="M334.6 62 L338.4 65.8 L334.6 69.6 M410.8 62 L414.6 65.8 L410.8 69.6" fill="none" stroke="#777" stroke-width="1"/><text x="344.4" y="69.8" font-size="10" fill="#519aba" font-family="Liberation Sans" stroke="#519aba" stroke-width="0.3">{ }</text><path transform="translate(419.6 58.8) scale(0.78125)" d="M11.34 9.71h.71l2.67-2.67v-.71L13.38 5h-.7l-1.82 1.81h-5V5.56l1.86-1.86V3l-2-2H5L1 5v.71l2 2h.71l1.14-1.15v5.79l.5.5H10v.52l1.33 1.34h.71l2.67-2.67v-.71L13.37 10h-.7l-1.86 1.85h-5v-4H10v.48l1.34 1.38zm1.69-3.65l.63.63-2 2-.63-.63 2-2zm0 5l.63.63-2 2-.63-.63 2-2zM3.35 6.65l-1.29-1.3 3.29-3.29 1.3 1.29-3.3 3.3z" fill="#d4993a" stroke="#d4993a" stroke-width="0.35"/><g fill="none" stroke="#555" stroke-width="1.1">
<rect x="610.5" y="38.4" width="11" height="10" rx="1.5"/><line x1="616" y1="38.4" x2="616" y2="48.4"/>
<path d="M643 43.6 L632.6 43.6 M636.8 39.4 L632.6 43.6 L636.8 47.8"/>
<path d="M654.6 43.6 L665 43.6 M660.8 39.4 L665 43.6 L660.8 47.8"/>
</g>
<path d="M676.6 43.6 h1 M681.4 43.6 h1 M686.2 43.6 h1" stroke="#555" stroke-width="1.8"/></svg><svg style="position:absolute;left:0;top:0;pointer-events:none" width="1024" height="683" viewBox="0 0 1024 683"><g fill="none" stroke-width="1" stroke-linejoin="round">
<path d="M504.6 83 L504.6 88.6 L499.8 88.6 M501.6 86.8 L499.8 88.6 L501.6 90.4" stroke="#a9cdf3"/>
<path d="M598.4 84.4 L605 84.4 L605 90.4 L598.4 90.4 L596 87.4 Z M600.2 86.2 L602.6 88.6 M602.6 86.2 L600.2 88.6" stroke="#a8a8a8"/>
<path d="M615.5 81 L618.4 84 M618.4 81.6 L618.4 84 L616 84 M623.6 81 L620.7 84 M620.7 81.6 L620.7 84 L623.1 84 M615.5 90.4 L618.4 87.4 M618.4 89.8 L618.4 87.4 L616 87.4 M623.6 90.4 L620.7 87.4 M620.7 89.8 L620.7 87.4 L623.1 87.4" stroke="#9a9a9a"/>
<path d="M362.6 635.4 L362.6 640.4 L357.6 640.4 M359.4 638.6 L357.6 640.4 L359.4 642.2" stroke="#b8d4f2"/>
<path d="M436.4 636.8 L444.6 636.8 L444.6 643 L436.4 643 L433.6 639.9 Z M438.6 638.4 L441.6 641.2 M441.6 638.4 L438.6 641.2" stroke="#a8a8a8"/>
<path d="M464.6 633.6 L464.6 643.6 M460.6 637.6 L464.6 633.6 L468.6 637.6" stroke="#b0b0b0"/>
<path d="M511.6 633.6 L511.6 643.6 M507.6 639.6 L511.6 643.6 L515.6 639.6" stroke="#b0b0b0"/>
<path d="M566.6 634.6 L562.6 639 L566.6 643.4 M655.6 634.6 L659.6 639 L655.6 643.4" stroke="#555"/>
</g></svg><svg style="position:absolute;left:0;top:0;pointer-events:none" width="1024" height="683" viewBox="0 0 1024 683"><g fill="none" stroke="#ececec" stroke-width="1.25" stroke-linejoin="round"><polygon points="867.05,264.06 902.72,284.24 902.72,325.29 867.05,346.16 832.06,325.29 832.06,284.24"/><polyline points="832.06,284.24 858.97,279.53"/><polyline points="902.72,284.24 875.13,279.53"/><polyline points="832.06,285.59 849.55,317.22"/><polyline points="832.06,319.24 852.92,286.94"/><polyline points="902.72,285.59 884.55,317.22"/><polyline points="902.72,319.24 881.18,286.94"/><polyline points="867.05,264.06 834.08,291.65"/><polyline points="867.05,264.06 900.70,291.65"/><polyline points="832.06,325.29 846.19,329.33"/><polyline points="902.72,325.29 887.91,329.33"/></g><g fill="#1c1c1c" stroke="#f0f0f0" stroke-width="1.3" stroke-linejoin="round"><polygon points="867.05,264.06 901.37,344.14 892.62,344.14 867.05,279.53 841.48,344.14 832.73,344.14"/><polygon points="849.55,319.24 884.55,319.24 895.99,344.14 838.11,344.14" fill="#1c1c1c" stroke="none"/></g><g fill="none" stroke="#f0f0f0" stroke-width="1.25"><polyline points="841.48,344.14 867.05,279.53 892.62,344.14"/><polyline points="849.55,319.24 884.55,319.24"/><polyline points="850.23,321.26 867.05,346.16 883.87,321.26"/><polyline points="846.19,329.33 887.91,329.33"/><polyline points="867.05,321.26 867.05,346.16"/><polyline points="838.11,344.14 846.19,329.33"/><polyline points="895.99,344.14 887.91,329.33"/><polyline points="832.73,344.14 867.05,264.06 901.37,344.14"/><polyline points="832.73,344.14 841.48,344.14"/><polyline points="892.62,344.14 901.37,344.14"/></g><circle cx="867.05" cy="308.47" r="10.4" fill="#1c1c1c" stroke="#ececec" stroke-width="1.3"/><circle cx="867.05" cy="308.47" r="3.2" fill="none" stroke="#e0e0e0" stroke-width="0.9"/><line x1="870.14" y1="309.30" x2="872.56" y2="316.33" stroke="#e0e0e0" stroke-width="0.9"/><line x1="867.88" y1="311.56" x2="862.99" y2="317.17" stroke="#e0e0e0" stroke-width="0.9"/><line x1="864.79" y1="310.73" x2="857.49" y2="309.31" stroke="#e0e0e0" stroke-width="0.9"/><line x1="863.96" y1="307.64" x2="861.54" y2="300.61" stroke="#e0e0e0" stroke-width="0.9"/><line x1="866.22" y1="305.38" x2="871.11" y2="299.77" stroke="#e0e0e0" stroke-width="0.9"/><line x1="869.31" y1="306.21" x2="876.61" y2="307.63" stroke="#e0e0e0" stroke-width="0.9"/><text x="869.5" y="369" font-size="20.4" fill="#f0f0f0" stroke="#1c1c1c" stroke-width="0.25" text-anchor="middle" font-family="Liberation Sans" letter-spacing="2.6" textLength="128" lengthAdjust="spacingAndGlyphs">ADAMSON</text><text x="868" y="382.2" font-size="10.2" fill="#b4b4b4" stroke="#1c1c1c" stroke-width="0.15" text-anchor="middle" font-family="Liberation Sans" letter-spacing="1.6" textLength="94" lengthAdjust="spacingAndGlyphs">PHOTOGRAPHY</text></svg><svg style="position:absolute;left:0;top:0;pointer-events:none" width="1024" height="683" viewBox="0 0 1024 683">
<g fill="none" stroke="#555" stroke-width="1.15">
 <path d="M947.5 38.8 L947.5 48.4 M942.7 43.6 L952.3 43.6"/>
 <path d="M963.8 40.6 A5.4 5.4 0 1 1 962.6 44.4" />
 <path d="M962 38.8 L963.6 41 L966 40.2"/>
 <path d="M968 40.8 L968 43.8 L970.2 45.4"/>
 <path d="M1005.2 39.8 L1012.6 47.2 M1012.6 39.8 L1005.2 47.2"/>
 <path d="M984 132 L987.6 135.6 L991.2 132" stroke="#aaa"/>
</g>
<path d="M984 43.6 h0.9 M987.8 43.6 h0.9 M991.6 43.6 h0.9" stroke="#555" stroke-width="1.7"/>
<g fill="none" stroke="#999" stroke-width="1">
 <rect x="742.6" y="447" width="10" height="10.4" rx="1"/>
 <path d="M742.8 455.6 L747.6 450.6 L752.6 455.8"/>
 <circle cx="749.8" cy="449.8" r="1"/>
</g>
<path d="M974 469 L974 477.6 M970.6 474.4 L974 477.8 L977.4 474.4" fill="none" stroke="#444" stroke-width="1.05"/>
<g fill="none" stroke="#9a9a9a" stroke-width="1">
 <path d="M723 573.6 L729.6 573.6 L733.2 577.2 L733.2 585.4 L723 585.4 Z"/>
 <rect x="742.4" y="574" width="11" height="10.6" rx="1.2"/>
 <path d="M745 577 L747 578.6 M746.2 580.4 L748.4 580.4"/>
 <path d="M763 579.6 L763 583.6 Q763 585 765 585 L773 585 Q775 585 775 583.6 L775 579.6 M763 579.6 L765 575.2 L773 575.2 L775 579.6 Z"/>
 <circle cx="789" cy="579.3" r="5.6"/>
 <circle cx="789" cy="579.3" r="2.2"/>
 <path d="M789 573.7 L786.2 577.2 M794.2 578.6 L791 580.4 M785 583.6 L787.6 580.4"/>
 <path d="M906.4 574.4 L908 576 L910.2 573.4 M906.4 583 L908 584.6 L910.2 582 M912.4 575 L918 575 M912.4 579.6 L918 579.6 M912.4 584.2 L918 584.2" stroke="#aaa"/>
</g>
<circle cx="731.2" cy="582.2" r="3.5" fill="#0f5bb0"/>
<circle cx="772.2" cy="582.2" r="3.5" fill="#0f5bb0"/>
<g fill="none" stroke="#888" stroke-width="1.05">
 <path d="M725.2 637.6 L725.2 645.8 M721.1 641.7 L729.3 641.7"/>
 <path d="M743.6 644.2 L747.4 640.4 L751.2 644.2"/>
 <path d="M805.6 644.2 L809.4 640.4 L813.2 644.2"/>
</g>
<g fill="none" stroke="#333" stroke-width="1.15">
 <rect x="974.3" y="635.2" width="4.6" height="7.6" rx="2.3"/>
 <path d="M972.2 640.4 Q972.2 645 976.6 645 Q981 645 981 640.4 M976.6 645 L976.6 647.4"/>
</g>
</svg><svg style="position:absolute;left:0;top:0;pointer-events:none" width="1024" height="683" viewBox="0 0 1024 683"><text x="727.6" y="107.2" font-size="8" font-weight="700" fill="#e8b53e" font-family="Liberation Sans">JS</text><text x="788.6" y="107.6" font-size="10" fill="#519aba" font-family="Liberation Sans" stroke="#519aba" stroke-width="0.3">{ }</text><path d="M861.0 100.30000000000001 L858.1999999999999 102.80000000000001 L861.0 105.4 M866.4 100.30000000000001 L869.1999999999999 102.80000000000001 L866.4 105.4 M865.0 99.10000000000001 L862.1999999999999 107.10000000000001" fill="none" stroke="#d4834e" stroke-width="1.3"/></svg><svg style="position:absolute;left:0;top:0;pointer-events:none" width="1024" height="683" viewBox="0 0 1024 683">
<rect x="0" y="664" width="35.6" height="18" fill="#0c5ebb"/>
<path d="M18.2 670.4 L21.3 674 L18.2 677.8 M26.2 667.4 L22.7 670.6 L26.2 674.3" fill="none" stroke="#a6d2ff" stroke-width="1.2"/>
<g fill="none" stroke="#444" stroke-width="1.05">
 <circle cx="48.8" cy="673.2" r="5.4"/>
 <path d="M46.6 671 L51 675.4 M51 671 L46.6 675.4"/>
 <path d="M79.2 667.6 L85 678.4 L73.4 678.4 Z"/>
 <path d="M79.2 671.2 L79.2 675"/>
 <circle cx="122.2" cy="673.2" r="5.4"/>
 <path d="M122.2 672 L122.2 676"/>
 <path d="M1006.2 676.4 L1015.4 676.4 M1007.4 676.2 L1007.4 671.4 Q1007.4 667.2 1010.8 667.2 Q1014.2 667.2 1014.2 671.4 L1014.2 676.2 M1009.4 678.4 L1012.2 678.4"/>
</g>
<circle cx="79.2" cy="676.6" r="0.6" fill="#444"/>
<circle cx="122.2" cy="670.4" r="0.6" fill="#444"/>
<text x="847" y="677.2" font-size="10.4" fill="#444" font-family="Liberation Sans">{ }</text>
</svg>
</body></html>
